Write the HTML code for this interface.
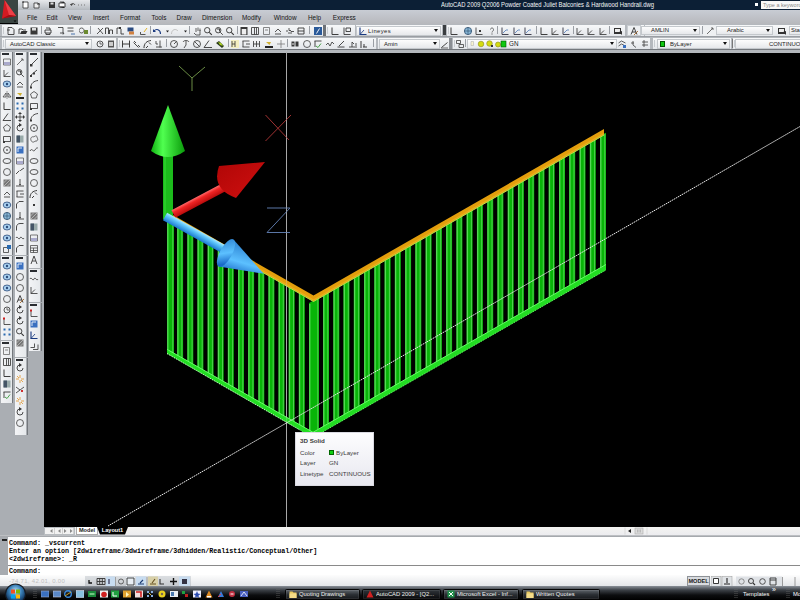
<!DOCTYPE html>
<html><head><meta charset="utf-8">
<style>
*{margin:0;padding:0;box-sizing:border-box}
html,body{width:800px;height:600px;overflow:hidden;background:#000;font-family:"Liberation Sans",sans-serif;position:relative}
.a{position:absolute}
</style></head><body>
<div class="a" style="left:0;top:0;width:18px;height:23px;background:#3a4542"></div>
<svg class="a" style="left:0;top:0" width="18" height="23"><path d="M4.5 0L16 16L2 18.5z" fill="#d41a22"/><path d="M4.5 0L16 16l-7-1z" fill="#ee4048"/><path d="M2 18.5l7-3.5 7 1z" fill="#a00c14"/><path d="M13.5 20.5h3l-1.5 1.5z" fill="#000"/></svg>
<div class="a" style="left:18px;top:0;width:72px;height:10px;background:linear-gradient(#e6e8eb,#b4b9bf)"></div>
<svg class="a" style="left:18px;top:0" width="72" height="10"><path d="M5 2h5v6H5z" fill="#fff" stroke="#333" stroke-width=".8"/><path d="M4 2h2" stroke="#333"/><path d="M16 3h4l1 1v4h-5z" fill="#eee" stroke="#333" stroke-width=".8"/><path d="M19 4h3" stroke="#333"/><path d="M31 2h6v6h-6z" fill="#333"/><path d="M32.5 2.5h3v2h-3z" fill="#ddd"/><path d="M41 3h6v4h-6z" fill="#fff" stroke="#333" stroke-width=".9"/><path d="M42 2h4v1M42 7h4v1" stroke="#333" stroke-width=".8"/><path d="M53 5c0-2 3-2 4 0" fill="none" stroke="#444" stroke-width="1"/><path d="M52 4l1.5 2 1.5-2z" fill="#444"/><path d="M60 5h1M63 5h1M66 5h1" stroke="#777"/></svg>
<div class="a" style="left:90px;top:0;width:710px;height:10px;background:#0c1f35"></div>
<div class="a" style="left:440.5px;top:0px;font-size:7.4px;line-height:10px;color:#f4f6f8;white-space:nowrap;transform-origin:0 0;transform:scaleX(0.795)">AutoCAD 2009 Q2006 Powder Coated Juliet Balconies &amp; Hardwood Handrail.dwg</div>
<div class="a" style="left:755px;top:3px;width:3px;height:3px;background:#fff"></div>
<div class="a" style="left:761px;top:1px;width:39px;height:8px;background:#f8f8f8;font-size:5.5px;line-height:8px;color:#888;padding-left:2px;white-space:nowrap;overflow:hidden">Type a keyword</div>
<div class="a" style="left:18px;top:10px;width:782px;height:14px;background:linear-gradient(#c8ccd4,#b7b8bc)"></div>
<div class="a" style="left:0;top:23.8px;width:800px;height:1px;background:#5e6266"></div>
<div class="a" style="left:27px;top:13px;font-size:6.4px;line-height:9px;color:#151515;white-space:nowrap">File</div>
<div class="a" style="left:46.5px;top:13px;font-size:6.4px;line-height:9px;color:#151515;white-space:nowrap">Edit</div>
<div class="a" style="left:68px;top:13px;font-size:6.4px;line-height:9px;color:#151515;white-space:nowrap">View</div>
<div class="a" style="left:93px;top:13px;font-size:6.4px;line-height:9px;color:#151515;white-space:nowrap">Insert</div>
<div class="a" style="left:120px;top:13px;font-size:6.4px;line-height:9px;color:#151515;white-space:nowrap">Format</div>
<div class="a" style="left:151.5px;top:13px;font-size:6.4px;line-height:9px;color:#151515;white-space:nowrap">Tools</div>
<div class="a" style="left:176.6px;top:13px;font-size:6.4px;line-height:9px;color:#151515;white-space:nowrap">Draw</div>
<div class="a" style="left:202px;top:13px;font-size:6.4px;line-height:9px;color:#151515;white-space:nowrap">Dimension</div>
<div class="a" style="left:242px;top:13px;font-size:6.4px;line-height:9px;color:#151515;white-space:nowrap">Modify</div>
<div class="a" style="left:273.8px;top:13px;font-size:6.4px;line-height:9px;color:#151515;white-space:nowrap">Window</div>
<div class="a" style="left:308px;top:13px;font-size:6.4px;line-height:9px;color:#151515;white-space:nowrap">Help</div>
<div class="a" style="left:332.7px;top:13px;font-size:6.4px;line-height:9px;color:#151515;white-space:nowrap">Express</div>
<div class="a" style="left:0;top:24px;width:800px;height:28.5px;background:#b4b8bd"></div>
<div class="a" style="left:0;top:49.3px;width:800px;height:1.2px;background:#74787d"></div>
<div class="a" style="left:0;top:36px;width:800px;height:1.2px;background:#9a9ea3"></div>
<div class="a" style="left:2px;top:24.5px;width:321px;height:11px;background:linear-gradient(#f7f8f9,#e3e6ea);"></div>
<div class="a" style="left:3px;top:26.5px;width:1px;height:7px;background:#c8ccd0"></div>
<div class="a" style="left:326px;top:24.5px;width:29px;height:11px;background:linear-gradient(#f7f8f9,#e3e6ea);"></div>
<div class="a" style="left:327px;top:26.5px;width:1px;height:7px;background:#c8ccd0"></div>
<div class="a" style="left:356px;top:24.5px;width:86px;height:11px;background:linear-gradient(#f7f8f9,#e3e6ea);"></div>
<div class="a" style="left:357px;top:26.5px;width:1px;height:7px;background:#c8ccd0"></div>
<div class="a" style="left:447px;top:24.5px;width:178px;height:11px;background:linear-gradient(#f7f8f9,#e3e6ea);"></div>
<div class="a" style="left:448px;top:26.5px;width:1px;height:7px;background:#c8ccd0"></div>
<div class="a" style="left:629px;top:24.5px;width:15px;height:11px;background:linear-gradient(#f7f8f9,#e3e6ea);"></div>
<div class="a" style="left:630px;top:26.5px;width:1px;height:7px;background:#c8ccd0"></div>
<div class="a" style="left:645px;top:24.5px;width:155px;height:11px;background:linear-gradient(#f7f8f9,#e3e6ea);"></div>
<div class="a" style="left:646px;top:26.5px;width:1px;height:7px;background:#c8ccd0"></div>
<div class="a" style="left:2px;top:37.5px;width:113.5px;height:11.5px;background:linear-gradient(#f7f8f9,#e3e6ea);"></div>
<div class="a" style="left:3px;top:39.5px;width:1px;height:7.5px;background:#c8ccd0"></div>
<div class="a" style="left:118px;top:37.5px;width:258px;height:11.5px;background:linear-gradient(#f7f8f9,#e3e6ea);"></div>
<div class="a" style="left:119px;top:39.5px;width:1px;height:7.5px;background:#c8ccd0"></div>
<div class="a" style="left:378px;top:37.5px;width:72px;height:11.5px;background:linear-gradient(#f7f8f9,#e3e6ea);"></div>
<div class="a" style="left:379px;top:39.5px;width:1px;height:7.5px;background:#c8ccd0"></div>
<div class="a" style="left:453px;top:37.5px;width:197px;height:11.5px;background:linear-gradient(#f7f8f9,#e3e6ea);"></div>
<div class="a" style="left:454px;top:39.5px;width:1px;height:7.5px;background:#c8ccd0"></div>
<div class="a" style="left:653px;top:37.5px;width:78px;height:11.5px;background:linear-gradient(#f7f8f9,#e3e6ea);"></div>
<div class="a" style="left:654px;top:39.5px;width:1px;height:7.5px;background:#c8ccd0"></div>
<div class="a" style="left:733px;top:37.5px;width:67px;height:11.5px;background:linear-gradient(#f7f8f9,#e3e6ea);"></div>
<div class="a" style="left:734px;top:39.5px;width:1px;height:7.5px;background:#c8ccd0"></div>
<div class="a" style="left:443px;top:25px;width:3px;height:10px;background:#3a3d40"></div>
<div class="a" style="left:323px;top:25px;width:2.5px;height:10.5px;background:#6e7277"></div>
<svg class="a" style="left:6px;top:25.5px" width="10" height="10" viewBox="0 0 10 10"><path d="M2 1.5h4l2 2v5h-6z" fill="none" stroke="#383838" stroke-width="0.91"/><path d="M1 4h3" fill="none" stroke="#383838" stroke-width="0.84"/></svg>
<svg class="a" style="left:18px;top:25.5px" width="10" height="10" viewBox="0 0 10 10"><path d="M1 8V3h3l1 1h3" fill="none" stroke="#383838" stroke-width="0.91"/><path d="M2 8l1.5-3H9.5L8 8z" fill="#333"/></svg>
<svg class="a" style="left:29px;top:25.5px" width="10" height="10" viewBox="0 0 10 10"><path d="M1.5 1.5h7v7h-7z" fill="#383838"/><path d="M3 2h4v2.5H3z" fill="#ddd"/></svg>
<svg class="a" style="left:43px;top:25.5px" width="10" height="10" viewBox="0 0 10 10"><path d="M2 4h6v3H2z M3 2h4v2 M3 7v1.5h4V7" fill="none" stroke="#383838" stroke-width="0.91"/></svg>
<svg class="a" style="left:56px;top:25.5px" width="10" height="10" viewBox="0 0 10 10"><path d="M2 1.5h5v6" fill="none" stroke="#383838" stroke-width="0.84"/><path d="M4 7h4l-1 1.5" fill="none" stroke="#383838" stroke-width="0.84"/></svg>
<svg class="a" style="left:66px;top:25.5px" width="10" height="10" viewBox="0 0 10 10"><path d="M1.5 2h6M1.5 5h6" fill="none" stroke="#383838" stroke-width="0.91"/><path d="M5 8h4" fill="none" stroke="#2a5aa0" stroke-width="0.84"/></svg>
<svg class="a" style="left:79px;top:25.5px" width="10" height="10" viewBox="0 0 10 10"><path d="M2.5 2a2.5 2.5 0 1 0 .1 0" fill="none" stroke="#383838" stroke-width="0.84"/><path d="M5 4h4v4H5z" fill="#6a8a30"/></svg>
<svg class="a" style="left:95px;top:25.5px" width="10" height="10" viewBox="0 0 10 10"><path d="M2 8L8 2M3 2l5 6" fill="none" stroke="#383838" stroke-width="0.84"/></svg>
<svg class="a" style="left:104px;top:25.5px" width="10" height="10" viewBox="0 0 10 10"><path d="M1.5 8V2h3v6 M5.5 8V4h3v4" fill="none" stroke="#383838" stroke-width="0.91"/></svg>
<svg class="a" style="left:115px;top:25.5px" width="10" height="10" viewBox="0 0 10 10"><path d="M2 8V2h3M6 3v5h3" fill="none" stroke="#383838" stroke-width="0.91"/><path d="M4 1h2v2H4z" fill="#383838"/></svg>
<svg class="a" style="left:126px;top:25.5px" width="10" height="10" viewBox="0 0 10 10"><path d="M1.5 1.5h6v4h-6z" fill="#2a4a80"/><path d="M3 5.5h5v3H3z" fill="#d08040"/></svg>
<svg class="a" style="left:139px;top:25.5px" width="10" height="10" viewBox="0 0 10 10"><path d="M1.5 6v2.5h5" fill="none" stroke="#383838" stroke-width="0.84"/><path d="M5 6l3-4" fill="none" stroke="#e0b020" stroke-width="0.98"/></svg>
<svg class="a" style="left:152px;top:25.5px" width="10" height="10" viewBox="0 0 10 10"><path d="M8.5 8C8.5 3 4 2.5 2 5" fill="none" stroke="#1a3a80" stroke-width="1.12"/><path d="M1 3l3 3H1z" fill="#1a3a80"/></svg>
<svg class="a" style="left:162px;top:25.5px" width="10" height="10" viewBox="0 0 10 10"><path d="M4 4.5h3L5.5 6.5z" fill="#222"/></svg>
<svg class="a" style="left:170px;top:25.5px" width="10" height="10" viewBox="0 0 10 10"><path d="M1.5 8C1.5 3 6 2.5 8 5" fill="none" stroke="#bbb" stroke-width="0.84"/></svg>
<svg class="a" style="left:180px;top:25.5px" width="10" height="10" viewBox="0 0 10 10"><path d="M4 4.5h3L5.5 6.5z" fill="#222"/></svg>
<svg class="a" style="left:192px;top:25.5px" width="10" height="10" viewBox="0 0 10 10"><path d="M2 7l2 2h4V4M4 6V2M6 5V1.5M8 5V2.5" fill="none" stroke="#383838" stroke-width="0.77"/></svg>
<svg class="a" style="left:203px;top:25.5px" width="10" height="10" viewBox="0 0 10 10"><path d="M4.2 4.2m-2.7 0a2.7 2.7 0 1 0 5.4 0a2.7 2.7 0 1 0-5.4 0" fill="none" stroke="#383838" stroke-width="0.91"/><path d="M6.3 6.3l2.5 2.5" fill="none" stroke="#383838" stroke-width="1.12"/></svg>
<svg class="a" style="left:214px;top:25.5px" width="10" height="10" viewBox="0 0 10 10"><path d="M4.2 4.2m-2.7 0a2.7 2.7 0 1 0 5.4 0a2.7 2.7 0 1 0-5.4 0" fill="none" stroke="#383838" stroke-width="0.91"/><path d="M6.3 6.3l2.5 2.5M3 3h2.5v2.5" fill="none" stroke="#383838" stroke-width="0.91"/></svg>
<svg class="a" style="left:225px;top:25.5px" width="10" height="10" viewBox="0 0 10 10"><path d="M4.2 4.2m-2.7 0a2.7 2.7 0 1 0 5.4 0a2.7 2.7 0 1 0-5.4 0" fill="none" stroke="#383838" stroke-width="0.91"/><path d="M6.3 6.3l2.5 2.5" fill="none" stroke="#383838" stroke-width="1.12"/></svg>
<svg class="a" style="left:239px;top:25.5px" width="10" height="10" viewBox="0 0 10 10"><path d="M1.5 1h7v8h-7z" fill="#383838"/><path d="M2.7 3h4.6v5.5H2.7z" fill="#eee"/></svg>
<svg class="a" style="left:250px;top:25.5px" width="10" height="10" viewBox="0 0 10 10"><path d="M1.5 1.5v7h7v-7z M4.5 1.5v7 M6.5 1.5v7" fill="none" stroke="#383838" stroke-width="0.84"/></svg>
<svg class="a" style="left:262px;top:25.5px" width="10" height="10" viewBox="0 0 10 10"><path d="M1.5 1.5h6v7h-6z M3 4h3" fill="none" stroke="#666" stroke-width="0.77"/></svg>
<svg class="a" style="left:273px;top:25.5px" width="10" height="10" viewBox="0 0 10 10"><path d="M2 6l3-3 3 3M2 8h6" fill="none" stroke="#383838" stroke-width="0.84"/></svg>
<svg class="a" style="left:285px;top:25.5px" width="10" height="10" viewBox="0 0 10 10"><path d="M1 5h2M4 2v2.5h2M6 8V5.5h3M3 7h2" fill="none" stroke="#383838" stroke-width="0.84"/></svg>
<svg class="a" style="left:296px;top:25.5px" width="10" height="10" viewBox="0 0 10 10"><path d="M2 2h6v6H2z M2 5h6" fill="none" stroke="#383838" stroke-width="0.91"/></svg>
<svg class="a" style="left:313px;top:25.5px" width="10" height="10" viewBox="0 0 10 10"><path d="M1 1h8v8H1z" fill="#2a5a9a"/><path d="M6.5 2.5l-3 5" fill="none" stroke="#fff" stroke-width="0.91"/></svg>
<svg class="a" style="left:330px;top:25.5px" width="10" height="10" viewBox="0 0 10 10"><path d="M2 1.5v7h6.5" fill="none" stroke="#383838" stroke-width="0.98"/></svg>
<svg class="a" style="left:342px;top:25.5px" width="10" height="10" viewBox="0 0 10 10"><path d="M2 1.5v7h6.5M4 2h4.5v3.5H4z" fill="none" stroke="#383838" stroke-width="0.91"/></svg>
<div class="a" style="left:41px;top:26px;width:1px;height:8px;background:#9a9ea4"></div>
<div class="a" style="left:90px;top:26px;width:1px;height:8px;background:#9a9ea4"></div>
<div class="a" style="left:150px;top:26px;width:1px;height:8px;background:#9a9ea4"></div>
<div class="a" style="left:189px;top:26px;width:1px;height:8px;background:#9a9ea4"></div>
<div class="a" style="left:237px;top:26px;width:1px;height:8px;background:#9a9ea4"></div>
<div class="a" style="left:309px;top:26px;width:1px;height:8px;background:#9a9ea4"></div>
<div class="a" style="left:356px;top:25.5px;width:85px;height:10px;background:linear-gradient(#fdfdfd,#e6e8eb);border:1px solid #c4c8cc;font-size:5.9px;line-height:8px;padding-left:2px;color:#1a1a1a;white-space:nowrap;overflow:hidden;"></div>
<div class="a" style="left:434px;top:29.0px;width:0;height:0;border-left:2.5px solid transparent;border-right:2.5px solid transparent;border-top:3px solid #111"></div>
<svg class="a" style="left:358px;top:25.5px" width="10" height="10" viewBox="0 0 10 10"><path d="M2 1.5v7h6.5" fill="none" stroke="#1a3a80" stroke-width="1.12"/><path d="M2 8.5L6 4" fill="none" stroke="#1a3a80" stroke-width="0.84"/></svg>
<div class="a" style="left:368px;top:25.5px;font-size:5.9px;line-height:10px;color:#1a1a1a;letter-spacing:.4px">Lineyes</div>
<svg class="a" style="left:449px;top:25.5px" width="10" height="10" viewBox="0 0 10 10"><path d="M2 1.5v7h6.5" fill="none" stroke="#383838" stroke-width="0.98"/></svg>
<svg class="a" style="left:463px;top:25.5px" width="10" height="10" viewBox="0 0 10 10"><circle cx="5" cy="5" r="3.6" fill="#8ab8d8" stroke="#2a4a6a" stroke-width=".8"/><path d="M1.5 5h7M5 1.5v7" stroke="#2a4a6a" stroke-width=".6"/></svg>
<svg class="a" style="left:474px;top:25.5px" width="10" height="10" viewBox="0 0 10 10"><path d="M2 1.5v7h6.5" fill="none" stroke="#383838" stroke-width="0.84"/><path d="M5 4h2v2H5z" fill="#383838"/></svg>
<svg class="a" style="left:487px;top:25.5px" width="10" height="10" viewBox="0 0 10 10"><path d="M3.5 3.5c0-2 3-2 3 0s-1.5 1.5-1.5 3" fill="none" stroke="#444" stroke-width="0.77"/><path d="M4.5 7.5h1v1h-1z" fill="#444"/></svg>
<svg class="a" style="left:500px;top:25.5px" width="10" height="10" viewBox="0 0 10 10"><path d="M2 1.5v7h6.5" fill="none" stroke="#223" stroke-width="0.84"/><path d="M3 7l3-3h2" fill="none" stroke="#3a6ab0" stroke-width="0.7"/></svg>
<svg class="a" style="left:512px;top:25.5px" width="10" height="10" viewBox="0 0 10 10"><path d="M2 1.5v7h6.5" fill="none" stroke="#223" stroke-width="0.84"/><path d="M3 7l3-3h2" fill="none" stroke="#3a6ab0" stroke-width="0.7"/></svg>
<svg class="a" style="left:523px;top:25.5px" width="10" height="10" viewBox="0 0 10 10"><path d="M2 1.5v7h6.5" fill="none" stroke="#223" stroke-width="0.84"/><path d="M3 7l3-3h2" fill="none" stroke="#3a6ab0" stroke-width="0.7"/></svg>
<svg class="a" style="left:539px;top:25.5px" width="10" height="10" viewBox="0 0 10 10"><path d="M2 1.5v7h6.5" fill="none" stroke="#383838" stroke-width="0.98"/></svg>
<svg class="a" style="left:550px;top:25.5px" width="10" height="10" viewBox="0 0 10 10"><path d="M2 8.5V2M2 8.5h6.5M2 8.5l4-4" fill="none" stroke="#383838" stroke-width="0.84"/></svg>
<svg class="a" style="left:561px;top:25.5px" width="10" height="10" viewBox="0 0 10 10"><path d="M2 1.5v7h6.5" fill="none" stroke="#223" stroke-width="0.84"/><path d="M3 7l3-3h2" fill="none" stroke="#3a6ab0" stroke-width="0.7"/></svg>
<svg class="a" style="left:575px;top:25.5px" width="10" height="10" viewBox="0 0 10 10"><path d="M2 8.5V2M2 8.5h6.5M2 8.5l4-4" fill="none" stroke="#383838" stroke-width="0.84"/></svg>
<svg class="a" style="left:586px;top:25.5px" width="10" height="10" viewBox="0 0 10 10"><path d="M2 8.5V2M2 8.5h6.5M2 8.5l4-4" fill="none" stroke="#383838" stroke-width="0.84"/></svg>
<svg class="a" style="left:598px;top:25.5px" width="10" height="10" viewBox="0 0 10 10"><path d="M2 8.5V2M2 8.5h6.5M2 8.5l4-4" fill="none" stroke="#383838" stroke-width="0.84"/></svg>
<svg class="a" style="left:613px;top:25.5px" width="10" height="10" viewBox="0 0 10 10"><path d="M1 2h7v6H1z" fill="#333"/><path d="M2 3h5v3H2z" fill="#eee"/><path d="M6 6l3 3V5z" fill="#333"/></svg>
<div class="a" style="left:497px;top:26px;width:1px;height:8px;background:#9a9ea4"></div>
<div class="a" style="left:536px;top:26px;width:1px;height:8px;background:#9a9ea4"></div>
<div class="a" style="left:573px;top:26px;width:1px;height:8px;background:#9a9ea4"></div>
<div class="a" style="left:609px;top:26px;width:1px;height:8px;background:#9a9ea4"></div>
<div class="a" style="left:627px;top:25px;width:14px;height:10.5px;background:#eef0f2;border:1px solid #c8ccd0"></div>
<svg class="a" style="left:629px;top:25.5px" width="10" height="10" viewBox="0 0 10 10"><path d="M2 8.5l3-7 3 7M3 6h4" fill="none" stroke="#333" stroke-width="0.91"/><path d="M5 9l4-4" fill="none" stroke="#a06020" stroke-width="0.84"/></svg>
<div class="a" style="left:641px;top:26px;width:59px;height:9px;background:linear-gradient(#fdfdfd,#e6e8eb);border:1px solid #c4c8cc;font-size:5.9px;line-height:7px;padding-left:9px;color:#1a1a1a;white-space:nowrap;overflow:hidden;">AMLIN</div>
<div class="a" style="left:693px;top:29.0px;width:0;height:0;border-left:2.5px solid transparent;border-right:2.5px solid transparent;border-top:3px solid #111"></div>
<div class="a" style="left:702px;top:26px;width:1px;height:8px;background:#9a9ea4"></div>
<div class="a" style="left:703px;top:25px;width:13px;height:10.5px;background:#eef0f2"></div>
<svg class="a" style="left:705px;top:25.5px" width="10" height="10" viewBox="0 0 10 10"><path d="M2 8l6-6M6 2h2v2" fill="none" stroke="#555" stroke-width="0.84"/></svg>
<div class="a" style="left:716px;top:26px;width:57px;height:9px;background:linear-gradient(#fdfdfd,#e6e8eb);border:1px solid #c4c8cc;font-size:5.9px;line-height:7px;padding-left:10px;color:#1a1a1a;white-space:nowrap;overflow:hidden;">Arabic</div>
<div class="a" style="left:766px;top:29.0px;width:0;height:0;border-left:2.5px solid transparent;border-right:2.5px solid transparent;border-top:3px solid #111"></div>
<svg class="a" style="left:777px;top:25.5px" width="10" height="10" viewBox="0 0 10 10"><path d="M1 2h7v6H1z" fill="#333"/><path d="M2 3h5v3H2z" fill="#eee"/><path d="M6 6l3 3V5z" fill="#333"/></svg>
<div class="a" style="left:789px;top:26px;width:12px;height:9px;background:linear-gradient(#fdfdfd,#e6e8eb);border:1px solid #c4c8cc;font-size:5.9px;line-height:7px;padding-left:1px;color:#1a1a1a;white-space:nowrap;overflow:hidden;">Sta</div>
<div class="a" style="left:5px;top:38.5px;width:87px;height:10px;background:linear-gradient(#fdfdfd,#e6e8eb);border:1px solid #c4c8cc;font-size:5.9px;line-height:8px;padding-left:4px;color:#1a1a1a;white-space:nowrap;overflow:hidden;">AutoCAD Classic</div>
<div class="a" style="left:85px;top:42.0px;width:0;height:0;border-left:2.5px solid transparent;border-right:2.5px solid transparent;border-top:3px solid #111"></div>
<svg class="a" style="left:95px;top:38.5px" width="10" height="10" viewBox="0 0 10 10"><path d="M5 5m-3 0a3 3 0 1 0 6 0a3 3 0 1 0-6 0" fill="none" stroke="#383838" stroke-width="0.84"/><path d="M5 3v2h2" fill="none" stroke="#383838" stroke-width="0.7"/></svg>
<svg class="a" style="left:106px;top:38.5px" width="10" height="10" viewBox="0 0 10 10"><path d="M2 1.5h6v7H2z" fill="#555"/><path d="M3 3h4v4H3z" fill="#ccc"/></svg>
<svg class="a" style="left:121px;top:38.5px" width="10" height="10" viewBox="0 0 10 10"><path d="M1.5 1.5v7M8.5 1.5v7M1.5 5h7" fill="none" stroke="#383838" stroke-width="0.98"/></svg>
<svg class="a" style="left:132px;top:38.5px" width="10" height="10" viewBox="0 0 10 10"><path d="M2 2l2 2M8 8l-2-2M1.5 3.5l5 5" fill="none" stroke="#383838" stroke-width="0.91"/></svg>
<svg class="a" style="left:143px;top:38.5px" width="10" height="10" viewBox="0 0 10 10"><path d="M1 9C1 4 4 2 8 1.5M3 9l2-2M6 3.5l2 2" fill="none" stroke="#383838" stroke-width="0.98"/></svg>
<svg class="a" style="left:154px;top:38.5px" width="10" height="10" viewBox="0 0 10 10"><path d="M2 2v3h2M6 1.5v7M2 8h6" fill="none" stroke="#383838" stroke-width="0.84"/></svg>
<svg class="a" style="left:169px;top:38.5px" width="10" height="10" viewBox="0 0 10 10"><path d="M5 5m-3.5 0a3.5 3.5 0 1 0 7 0a3.5 3.5 0 1 0-7 0 M5 5l2.5-2.5" fill="none" stroke="#383838" stroke-width="0.84"/></svg>
<svg class="a" style="left:181px;top:38.5px" width="10" height="10" viewBox="0 0 10 10"><path d="M2 3c1-2 5-2 6 0M5 2v4l-2 3" fill="none" stroke="#383838" stroke-width="0.84"/></svg>
<svg class="a" style="left:192px;top:38.5px" width="10" height="10" viewBox="0 0 10 10"><path d="M5 5m-3.5 0a3.5 3.5 0 1 0 7 0a3.5 3.5 0 1 0-7 0 M2.5 2.5l5 5" fill="none" stroke="#383838" stroke-width="0.84"/></svg>
<svg class="a" style="left:203px;top:38.5px" width="10" height="10" viewBox="0 0 10 10"><path d="M1 8.5h8M1 8.5l5-7" fill="none" stroke="#383838" stroke-width="0.91"/></svg>
<svg class="a" style="left:215px;top:38.5px" width="10" height="10" viewBox="0 0 10 10"><path d="M1 4l3-2 5 5-2 2z" fill="#2a3a1a"/><path d="M3 3l3 1 2 3-3-1z" fill="#a8d020"/></svg>
<svg class="a" style="left:230px;top:38.5px" width="10" height="10" viewBox="0 0 10 10"><path d="M1 1h8v8H1z" fill="#f4eec0"/><path d="M2 2v6M2 5h3M5 2v6" fill="none" stroke="#383838" stroke-width="0.84"/></svg>
<svg class="a" style="left:241px;top:38.5px" width="10" height="10" viewBox="0 0 10 10"><path d="M1.5 2h7M1.5 8h7M2 2v6M5 5h4" fill="none" stroke="#383838" stroke-width="0.84"/></svg>
<svg class="a" style="left:252px;top:38.5px" width="10" height="10" viewBox="0 0 10 10"><path d="M1.5 2v6M4.5 2v6M7.5 2v6M1.5 5h6" fill="none" stroke="#383838" stroke-width="0.84"/></svg>
<svg class="a" style="left:264px;top:38.5px" width="10" height="10" viewBox="0 0 10 10"><path d="M1 7h8v2H1z" fill="#222"/><path d="M2 3h5l-1.5 3z" fill="#d0b030"/></svg>
<svg class="a" style="left:276px;top:38.5px" width="10" height="10" viewBox="0 0 10 10"><path d="M5 1v8M1 5h8" fill="none" stroke="#777" stroke-width="0.77"/></svg>
<svg class="a" style="left:290px;top:38.5px" width="10" height="10" viewBox="0 0 10 10"><path d="M1.5 2.5h3v5h-3z M5.5 2.5h3v5h-3z" fill="#383838"/><path d="M2.5 4h1v2h-1z" fill="#eee"/></svg>
<svg class="a" style="left:302px;top:38.5px" width="10" height="10" viewBox="0 0 10 10"><path d="M5 5m-3.5 0a3.5 3.5 0 1 0 7 0a3.5 3.5 0 1 0-7 0" fill="none" stroke="#383838" stroke-width="0.77"/></svg>
<svg class="a" style="left:313px;top:38.5px" width="10" height="10" viewBox="0 0 10 10"><path d="M1.5 2h7M2 2v6" fill="none" stroke="#383838" stroke-width="0.91"/><path d="M3 7l2 1.5 3-4" fill="none" stroke="#3a9a3a" stroke-width="0.91"/></svg>
<svg class="a" style="left:325px;top:38.5px" width="10" height="10" viewBox="0 0 10 10"><path d="M1 6l2-2 2 3 2-4 2 2" fill="none" stroke="#383838" stroke-width="0.84"/></svg>
<svg class="a" style="left:336px;top:38.5px" width="10" height="10" viewBox="0 0 10 10"><path d="M1.5 8h7M3 7l5-5" fill="none" stroke="#383838" stroke-width="0.91"/></svg>
<svg class="a" style="left:348px;top:38.5px" width="10" height="10" viewBox="0 0 10 10"><path d="M1 8h6M4 8V3l2 2M8 4v5" fill="none" stroke="#383838" stroke-width="0.84"/></svg>
<svg class="a" style="left:359px;top:38.5px" width="10" height="10" viewBox="0 0 10 10"><path d="M2 2v7M4 8h4M5 5v3" fill="none" stroke="#383838" stroke-width="0.98"/></svg>
<div class="a" style="left:166px;top:39px;width:1px;height:8px;background:#9a9ea4"></div>
<div class="a" style="left:228px;top:39px;width:1px;height:8px;background:#9a9ea4"></div>
<div class="a" style="left:287px;top:39px;width:1px;height:8px;background:#9a9ea4"></div>
<div class="a" style="left:373px;top:39px;width:1px;height:8px;background:#9a9ea4"></div>
<div class="a" style="left:379px;top:38.5px;width:61px;height:10px;background:linear-gradient(#fdfdfd,#e6e8eb);border:1px solid #c4c8cc;font-size:5.9px;line-height:8px;padding-left:4px;color:#1a1a1a;white-space:nowrap;overflow:hidden;">Amin</div>
<div class="a" style="left:433px;top:42.0px;width:0;height:0;border-left:2.5px solid transparent;border-right:2.5px solid transparent;border-top:3px solid #111"></div>
<svg class="a" style="left:440px;top:38.5px" width="10" height="10" viewBox="0 0 10 10"><path d="M1.5 8.5l6-5" fill="none" stroke="#333" stroke-width="0.91"/><path d="M1 9h7" fill="none" stroke="#333" stroke-width="0.7"/></svg>
<div class="a" style="left:449px;top:38px;width:3px;height:10.5px;background:#8a8e93"></div>
<svg class="a" style="left:455px;top:38.5px" width="10" height="10" viewBox="0 0 10 10"><path d="M1.5 1.5h4v3h-4zM4 5.5h4.5v3H4z" fill="none" stroke="#383838" stroke-width="0.77"/></svg>
<div class="a" style="left:465px;top:39px;width:1px;height:8px;background:#9a9ea4"></div>
<div class="a" style="left:467px;top:38.5px;width:150px;height:10px;background:linear-gradient(#fdfdfd,#e6e8eb);border:1px solid #c4c8cc;font-size:5.9px;line-height:8px;padding-left:4px;color:#1a1a1a;white-space:nowrap;overflow:hidden;"></div>
<div class="a" style="left:610px;top:42.0px;width:0;height:0;border-left:2.5px solid transparent;border-right:2.5px solid transparent;border-top:3px solid #111"></div>
<svg class="a" style="left:467px;top:38.5px" width="60" height="10"><path d="M4 2.5h2.5v4H4z" fill="#f8f4d0" stroke="#aaa" stroke-width=".5"/><circle cx="14" cy="5" r="2.8" fill="#d4dc10" stroke="#8a8a20" stroke-width=".6"/><circle cx="22.5" cy="4.5" r="2.8" fill="#d4dc10" stroke="#8a8a20" stroke-width=".6"/><path d="M24 6h2v2h-2z" fill="#333"/><circle cx="31" cy="5.5" r="2.5" fill="#d4dc10" stroke="#8a8a20" stroke-width=".6"/><rect x="34" y="2" width="5" height="6" fill="#10c810" stroke="#050" stroke-width=".6"/></svg>
<div class="a" style="left:509px;top:38.5px;font-size:6.3px;line-height:10px;color:#222">GN</div>
<svg class="a" style="left:617px;top:38.5px" width="10" height="10" viewBox="0 0 10 10"><path d="M1.5 7l3-2 4 2M1.5 4l3-2 4 2" fill="none" stroke="#333" stroke-width="0.77"/><path d="M6 6h3v3H6z" fill="#3a70c0"/></svg>
<svg class="a" style="left:629px;top:38.5px" width="10" height="10" viewBox="0 0 10 10"><path d="M2 4h3M4 2v4l3 2.5" fill="none" stroke="#383838" stroke-width="0.77"/></svg>
<svg class="a" style="left:640px;top:38.5px" width="10" height="10" viewBox="0 0 10 10"><path d="M2 3h6M2 6h6M4 1v7" fill="none" stroke="#383838" stroke-width="0.77"/></svg>
<div class="a" style="left:657px;top:38.5px;width:73px;height:10px;background:linear-gradient(#fdfdfd,#e6e8eb);border:1px solid #c4c8cc;font-size:5.9px;line-height:8px;padding-left:12px;color:#1a1a1a;white-space:nowrap;overflow:hidden;">ByLayer</div>
<div class="a" style="left:723px;top:42.0px;width:0;height:0;border-left:2.5px solid transparent;border-right:2.5px solid transparent;border-top:3px solid #111"></div>
<div class="a" style="left:660px;top:40.5px;width:5px;height:6px;background:#10c810;border:1px solid #050"></div>
<div class="a" style="left:732px;top:39px;width:1px;height:9px;background:#777"></div>
<div class="a" style="left:735px;top:38.5px;width:66px;height:10px;background:linear-gradient(#fdfdfd,#e6e8eb);border:1px solid #c4c8cc;font-size:5.9px;line-height:8px;padding-left:33px;color:#1a1a1a;white-space:nowrap;overflow:hidden;">CONTINUOUS</div>
<div class="a" style="left:0;top:52px;width:44px;height:485px;background:#aaaeb3"></div>
<div class="a" style="left:1px;top:52.3px;width:10.7px;height:202.7px;background:linear-gradient(90deg,#f3f4f6,#e6e9ec)"></div>
<div class="a" style="left:12.299999999999999px;top:52.3px;width:1.2px;height:202.7px;background:#74787d"></div>
<div class="a" style="left:2.2px;top:53.099999999999994px;width:7px;height:2px;background:#2a2d31"></div>
<svg class="a" style="left:1.5px;top:57.3px" width="10" height="10" viewBox="0 0 10 10"><path d="M1.5 2h7v6h-7z" fill="none" stroke="#555" stroke-width="0.77"/><path d="M2 5h6v3H2z" fill="#aac"/></svg>
<svg class="a" style="left:1.5px;top:68.3px" width="10" height="10" viewBox="0 0 10 10"><path d="M2 8.5V2M2 8.5h6.5M2 8.5l4-4" fill="none" stroke="#383838" stroke-width="0.84"/></svg>
<svg class="a" style="left:1.5px;top:79.3px" width="10" height="10" viewBox="0 0 10 10"><ellipse cx="5" cy="5" rx="3.8" ry="3" fill="#a8d0f0" stroke="#2a4a7a" stroke-width=".8"/><circle cx="5" cy="5" r="1.2" fill="#2a4a7a"/></svg>
<svg class="a" style="left:1.5px;top:90.3px" width="10" height="10" viewBox="0 0 10 10"><path d="M5 1v8" fill="none" stroke="#777" stroke-width="0.7"/><path d="M1 7l3-4v4zM9 7L6 3v4z" fill="none" stroke="#383838" stroke-width="0.7"/></svg>
<svg class="a" style="left:1.5px;top:101.3px" width="10" height="10" viewBox="0 0 10 10"><path d="M2 1.5v7h6.5" fill="none" stroke="#383838" stroke-width="0.98"/></svg>
<svg class="a" style="left:1.5px;top:112.3px" width="10" height="10" viewBox="0 0 10 10"><path d="M1 8.5h8M1 8.5l5-7" fill="none" stroke="#383838" stroke-width="0.91"/></svg>
<svg class="a" style="left:1.5px;top:123.3px" width="10" height="10" viewBox="0 0 10 10"><path d="M5 1.5l3.5 2.5-1.3 4H2.8L1.5 4z" fill="none" stroke="#383838" stroke-width="0.77"/></svg>
<svg class="a" style="left:1.5px;top:134.3px" width="10" height="10" viewBox="0 0 10 10"><path d="M1.5 2.5h7v5h-7z" fill="none" stroke="#383838" stroke-width="0.84"/><path d="M1 7h2v2H1z" fill="#383838"/></svg>
<svg class="a" style="left:1.5px;top:145.3px" width="10" height="10" viewBox="0 0 10 10"><path d="M5 5m-3.5 0a3.5 3.5 0 1 0 7 0a3.5 3.5 0 1 0-7 0" fill="none" stroke="#383838" stroke-width="0.84"/><path d="M4.3 4.3h1.4v1.4H4.3z" fill="#383838"/></svg>
<svg class="a" style="left:1.5px;top:156.3px" width="10" height="10" viewBox="0 0 10 10"><path d="M5 5m-4 0a4 2.5 0 1 0 8 0a4 2.5 0 1 0-8 0" fill="none" stroke="#383838" stroke-width="0.84"/></svg>
<svg class="a" style="left:1.5px;top:167.3px" width="10" height="10" viewBox="0 0 10 10"><path d="M5 5m-3.5 0a3.5 3.5 0 1 0 7 0a3.5 3.5 0 1 0-7 0" fill="none" stroke="#383838" stroke-width="0.77"/></svg>
<svg class="a" style="left:1.5px;top:178.3px" width="10" height="10" viewBox="0 0 10 10"><path d="M1.5 1.5h7v7h-7z" fill="#777"/><path d="M1.5 5l3.5-3.5M1.5 8.5l7-7M5 8.5l3.5-3.5" fill="none" stroke="#ccc" stroke-width="0.7"/></svg>
<svg class="a" style="left:1.5px;top:189.3px" width="10" height="10" viewBox="0 0 10 10"><path d="M2 6l3-3 3 3M2 8h6" fill="none" stroke="#383838" stroke-width="0.84"/></svg>
<svg class="a" style="left:1.5px;top:200.3px" width="10" height="10" viewBox="0 0 10 10"><ellipse cx="5" cy="5" rx="3.8" ry="3" fill="#a8d0f0" stroke="#2a4a7a" stroke-width=".8"/><circle cx="5" cy="5" r="1.2" fill="#2a4a7a"/></svg>
<svg class="a" style="left:1.5px;top:211.3px" width="10" height="10" viewBox="0 0 10 10"><circle cx="5" cy="5" r="3.6" fill="#8ab8d8" stroke="#2a4a6a" stroke-width=".8"/><path d="M1.5 5h7M5 1.5v7" stroke="#2a4a6a" stroke-width=".6"/></svg>
<svg class="a" style="left:1.5px;top:222.3px" width="10" height="10" viewBox="0 0 10 10"><ellipse cx="5" cy="5" rx="3.8" ry="3" fill="#a8d0f0" stroke="#2a4a7a" stroke-width=".8"/><circle cx="5" cy="5" r="1.2" fill="#2a4a7a"/></svg>
<svg class="a" style="left:1.5px;top:233.3px" width="10" height="10" viewBox="0 0 10 10"><ellipse cx="5" cy="5" rx="3.8" ry="3" fill="#a8d0f0" stroke="#2a4a7a" stroke-width=".8"/><circle cx="5" cy="5" r="1.2" fill="#2a4a7a"/></svg>
<svg class="a" style="left:1.5px;top:244.3px" width="10" height="10" viewBox="0 0 10 10"><path d="M1.5 3.5h5v5h-5z" fill="none" stroke="#383838" stroke-width="0.77"/><path d="M5 1h4v4H5z" fill="#2a6ab0"/></svg>
<div class="a" style="left:1px;top:256px;width:10.7px;height:84px;background:linear-gradient(90deg,#f3f4f6,#e6e9ec)"></div>
<div class="a" style="left:12.299999999999999px;top:256px;width:1.2px;height:84px;background:#74787d"></div>
<div class="a" style="left:2.2px;top:256.8px;width:7px;height:2px;background:#2a2d31"></div>
<svg class="a" style="left:1.5px;top:261px" width="10" height="10" viewBox="0 0 10 10"><ellipse cx="5" cy="5" rx="3.8" ry="3" fill="#a8d0f0" stroke="#2a4a7a" stroke-width=".8"/><circle cx="5" cy="5" r="1.2" fill="#2a4a7a"/></svg>
<svg class="a" style="left:1.5px;top:272px" width="10" height="10" viewBox="0 0 10 10"><ellipse cx="5" cy="5" rx="3.8" ry="3" fill="#a8d0f0" stroke="#2a4a7a" stroke-width=".8"/><circle cx="5" cy="5" r="1.2" fill="#2a4a7a"/></svg>
<svg class="a" style="left:1.5px;top:283px" width="10" height="10" viewBox="0 0 10 10"><ellipse cx="5" cy="5" rx="3.8" ry="3" fill="#a8d0f0" stroke="#2a4a7a" stroke-width=".8"/><circle cx="5" cy="5" r="1.2" fill="#2a4a7a"/></svg>
<svg class="a" style="left:1.5px;top:294px" width="10" height="10" viewBox="0 0 10 10"><path d="M5 5m-3.5 0a3.5 3.5 0 1 0 7 0a3.5 3.5 0 1 0-7 0" fill="none" stroke="#383838" stroke-width="0.77"/></svg>
<svg class="a" style="left:1.5px;top:305px" width="10" height="10" viewBox="0 0 10 10"><path d="M5 5m-3 0a3 3 0 1 0 6 0a3 3 0 1 0-6 0" fill="none" stroke="#383838" stroke-width="0.84"/><path d="M5 3v2h2" fill="none" stroke="#383838" stroke-width="0.7"/></svg>
<svg class="a" style="left:1.5px;top:316px" width="10" height="10" viewBox="0 0 10 10"><path d="M2 8.5V2M2 8.5h6.5" fill="none" stroke="#383838" stroke-width="0.84"/><path d="M1 1.5h2v2H1z" fill="#d02020"/></svg>
<svg class="a" style="left:1.5px;top:327px" width="10" height="10" viewBox="0 0 10 10"><path d="M1.5 1.5h2v2h-2zM6.5 1.5h2v2h-2zM1.5 6.5h2v2h-2zM6.5 6.5h2v2h-2z" fill="#2a6ab0"/></svg>
<div class="a" style="left:1px;top:341px;width:10.7px;height:62px;background:linear-gradient(90deg,#f3f4f6,#e6e9ec)"></div>
<div class="a" style="left:12.299999999999999px;top:341px;width:1.2px;height:62px;background:#74787d"></div>
<div class="a" style="left:2.2px;top:341.8px;width:7px;height:2px;background:#2a2d31"></div>
<svg class="a" style="left:1.5px;top:346px" width="10" height="10" viewBox="0 0 10 10"><path d="M1.5 1.5h6v7h-6z M3 4h3" fill="none" stroke="#666" stroke-width="0.77"/></svg>
<svg class="a" style="left:1.5px;top:357px" width="10" height="10" viewBox="0 0 10 10"><path d="M1.5 1.5v7h7v-7z M4.5 1.5v7 M6.5 1.5v7" fill="none" stroke="#383838" stroke-width="0.84"/></svg>
<svg class="a" style="left:1.5px;top:368px" width="10" height="10" viewBox="0 0 10 10"><path d="M2 1.5v7h6.5" fill="none" stroke="#383838" stroke-width="0.98"/></svg>
<svg class="a" style="left:1.5px;top:379px" width="10" height="10" viewBox="0 0 10 10"><path d="M1.5 1.5h7v7h-7z" fill="#9aa"/><path d="M1.5 1.5h3.5v7H1.5z" fill="#456"/></svg>
<svg class="a" style="left:1.5px;top:390px" width="10" height="10" viewBox="0 0 10 10"><path d="M1.5 2h7M2 2v6" fill="none" stroke="#383838" stroke-width="0.91"/><path d="M3 7l2 1.5 3-4" fill="none" stroke="#3a9a3a" stroke-width="0.91"/></svg>
<div class="a" style="left:14.7px;top:52.3px;width:11.4px;height:202.7px;background:linear-gradient(90deg,#f3f4f6,#e6e9ec)"></div>
<div class="a" style="left:26.700000000000003px;top:52.3px;width:1.2px;height:202.7px;background:#74787d"></div>
<div class="a" style="left:15.899999999999999px;top:53.099999999999994px;width:7px;height:2px;background:#2a2d31"></div>
<svg class="a" style="left:15.2px;top:57.3px" width="10" height="10" viewBox="0 0 10 10"><path d="M2 8l6-6M6 2h2v2" fill="none" stroke="#555" stroke-width="0.84"/></svg>
<svg class="a" style="left:15.2px;top:68.3px" width="10" height="10" viewBox="0 0 10 10"><path d="M4.2 4.2m-2.7 0a2.7 2.7 0 1 0 5.4 0a2.7 2.7 0 1 0-5.4 0" fill="none" stroke="#383838" stroke-width="0.91"/><path d="M6.3 6.3l2.5 2.5M3 3h2.5v2.5" fill="none" stroke="#383838" stroke-width="0.91"/></svg>
<svg class="a" style="left:15.2px;top:79.3px" width="10" height="10" viewBox="0 0 10 10"><path d="M2 6l3-3 3 3M2 8h6" fill="none" stroke="#383838" stroke-width="0.84"/></svg>
<svg class="a" style="left:15.2px;top:90.3px" width="10" height="10" viewBox="0 0 10 10"><path d="M1 7h8v2H1z" fill="#222"/><path d="M2 3h5l-1.5 3z" fill="#d0b030"/></svg>
<svg class="a" style="left:15.2px;top:101.3px" width="10" height="10" viewBox="0 0 10 10"><path d="M1.5 1.5h2v2h-2zM6.5 1.5h2v2h-2zM1.5 6.5h2v2h-2zM6.5 6.5h2v2h-2z" fill="#2a6ab0"/></svg>
<svg class="a" style="left:15.2px;top:112.3px" width="10" height="10" viewBox="0 0 10 10"><path d="M5 1v8M1 5h8" fill="none" stroke="#383838" stroke-width="0.84"/><path d="M5 0l2 2H3zM5 10l2-2H3zM0 5l2-2v4zM10 5l-2-2v4z" fill="#383838"/></svg>
<svg class="a" style="left:15.2px;top:123.3px" width="10" height="10" viewBox="0 0 10 10"><path d="M8 5a3 3 0 1 1-3-3" fill="none" stroke="#383838" stroke-width="0.91"/><path d="M4 0l3 2-3 2z" fill="#383838"/></svg>
<svg class="a" style="left:15.2px;top:134.3px" width="10" height="10" viewBox="0 0 10 10"><path d="M1.5 1.5h7v7h-7z" fill="#9aa"/><path d="M1.5 1.5h3.5v7H1.5z" fill="#456"/></svg>
<svg class="a" style="left:15.2px;top:145.3px" width="10" height="10" viewBox="0 0 10 10"><path d="M1.5 1.5h7v7h-7z" fill="#3a70c0"/><path d="M3 7V3h4" fill="none" stroke="#fff" stroke-width="0.84"/></svg>
<svg class="a" style="left:15.2px;top:156.3px" width="10" height="10" viewBox="0 0 10 10"><path d="M1.5 2h7v6h-7z" fill="none" stroke="#555" stroke-width="0.77"/><path d="M2 5h6v3H2z" fill="#aac"/></svg>
<svg class="a" style="left:15.2px;top:167.3px" width="10" height="10" viewBox="0 0 10 10"><path d="M1 7l3-3M6 3l3-2" fill="none" stroke="#383838" stroke-width="0.91"/><path d="M4 4h2v-1" fill="#333"/></svg>
<svg class="a" style="left:15.2px;top:178.3px" width="10" height="10" viewBox="0 0 10 10"><path d="M1 8h8M5 1v6" fill="none" stroke="#383838" stroke-width="0.84"/><path d="M4 6l1 2 1-2z" fill="#383838"/></svg>
<svg class="a" style="left:15.2px;top:189.3px" width="10" height="10" viewBox="0 0 10 10"><path d="M1.5 2h7M1.5 8h7M2 2v6M5 5h4" fill="none" stroke="#383838" stroke-width="0.84"/></svg>
<svg class="a" style="left:15.2px;top:200.3px" width="10" height="10" viewBox="0 0 10 10"><path d="M1.5 8.5V4L4 1.5h4.5" fill="none" stroke="#383838" stroke-width="0.91"/></svg>
<svg class="a" style="left:15.2px;top:211.3px" width="10" height="10" viewBox="0 0 10 10"><path d="M1 8h8M5 1v6" fill="none" stroke="#383838" stroke-width="0.84"/><path d="M4 6l1 2 1-2z" fill="#383838"/></svg>
<svg class="a" style="left:15.2px;top:222.3px" width="10" height="10" viewBox="0 0 10 10"><path d="M1.5 8.5V5C1.5 3 3 1.5 5 1.5h3.5" fill="none" stroke="#383838" stroke-width="0.91"/></svg>
<svg class="a" style="left:15.2px;top:233.3px" width="10" height="10" viewBox="0 0 10 10"><path d="M1 5c1.5-3 2.5 3 4 0s2.5 3 4 0" fill="none" stroke="#383838" stroke-width="0.91"/></svg>
<svg class="a" style="left:15.2px;top:244.3px" width="10" height="10" viewBox="0 0 10 10"><path d="M1.5 8.5V4L4 1.5h4.5" fill="none" stroke="#383838" stroke-width="0.91"/></svg>
<div class="a" style="left:14.7px;top:256px;width:11.4px;height:101px;background:linear-gradient(90deg,#f3f4f6,#e6e9ec)"></div>
<div class="a" style="left:26.700000000000003px;top:256px;width:1.2px;height:101px;background:#74787d"></div>
<div class="a" style="left:15.899999999999999px;top:256.8px;width:7px;height:2px;background:#2a2d31"></div>
<svg class="a" style="left:15.2px;top:261px" width="10" height="10" viewBox="0 0 10 10"><path d="M1.5 1.5h7v7h-7z" fill="#3a70c0"/><path d="M3 7V3h4" fill="none" stroke="#fff" stroke-width="0.84"/></svg>
<svg class="a" style="left:15.2px;top:272px" width="10" height="10" viewBox="0 0 10 10"><path d="M5 5m-3.5 0a3.5 3.5 0 1 0 7 0a3.5 3.5 0 1 0-7 0" fill="none" stroke="#383838" stroke-width="0.77"/></svg>
<svg class="a" style="left:15.2px;top:283px" width="10" height="10" viewBox="0 0 10 10"><path d="M5 5m-3.5 0a3.5 3.5 0 1 0 7 0a3.5 3.5 0 1 0-7 0" fill="none" stroke="#383838" stroke-width="0.77"/></svg>
<svg class="a" style="left:15.2px;top:294px" width="10" height="10" viewBox="0 0 10 10"><path d="M2 8.5l3-7 3 7M3 6h4" fill="none" stroke="#333" stroke-width="0.91"/><path d="M5 9l4-4" fill="none" stroke="#a06020" stroke-width="0.84"/></svg>
<svg class="a" style="left:15.2px;top:305px" width="10" height="10" viewBox="0 0 10 10"><path d="M8 5a3 3 0 1 1-3-3" fill="none" stroke="#383838" stroke-width="0.91"/><path d="M4 0l3 2-3 2z" fill="#383838"/></svg>
<svg class="a" style="left:15.2px;top:316px" width="10" height="10" viewBox="0 0 10 10"><path d="M8 5a3 3 0 1 1-3-3" fill="none" stroke="#383838" stroke-width="0.91"/><path d="M4 0l3 2-3 2z" fill="#383838"/></svg>
<svg class="a" style="left:15.2px;top:327px" width="10" height="10" viewBox="0 0 10 10"><path d="M4.2 4.2m-2.7 0a2.7 2.7 0 1 0 5.4 0a2.7 2.7 0 1 0-5.4 0" fill="none" stroke="#383838" stroke-width="0.91"/><path d="M6.3 6.3l2.5 2.5" fill="none" stroke="#383838" stroke-width="1.12"/></svg>
<svg class="a" style="left:15.2px;top:338px" width="10" height="10" viewBox="0 0 10 10"><path d="M1.5 1.5h7v7h-7z" fill="#777"/><path d="M1.5 5l3.5-3.5M1.5 8.5l7-7M5 8.5l3.5-3.5" fill="none" stroke="#ccc" stroke-width="0.7"/></svg>
<div class="a" style="left:14.7px;top:358px;width:11.4px;height:77px;background:linear-gradient(90deg,#f3f4f6,#e6e9ec)"></div>
<div class="a" style="left:26.700000000000003px;top:358px;width:1.2px;height:77px;background:#74787d"></div>
<div class="a" style="left:15.899999999999999px;top:358.8px;width:7px;height:2px;background:#2a2d31"></div>
<svg class="a" style="left:15.2px;top:363px" width="10" height="10" viewBox="0 0 10 10"><path d="M8 5a3 3 0 1 1-3-3" fill="none" stroke="#383838" stroke-width="0.91"/><path d="M4 0l3 2-3 2z" fill="#383838"/></svg>
<svg class="a" style="left:15.2px;top:374px" width="10" height="10" viewBox="0 0 10 10"><path d="M5 1v3M5 6v3M1 5h3M6 5h3M2 2l2 2M6 6l2 2" fill="none" stroke="#e09020" stroke-width="0.77"/></svg>
<svg class="a" style="left:15.2px;top:385px" width="10" height="10" viewBox="0 0 10 10"><path d="M1 8L9 2M1 2l4 3" fill="none" stroke="#383838" stroke-width="0.84"/><path d="M6 5h2v2H6z" fill="#d03030"/></svg>
<svg class="a" style="left:15.2px;top:396px" width="10" height="10" viewBox="0 0 10 10"><path d="M5 1v3M5 6v3M1 5h3M6 5h3M2 2l2 2M6 6l2 2" fill="none" stroke="#e09020" stroke-width="0.77"/></svg>
<svg class="a" style="left:15.2px;top:407px" width="10" height="10" viewBox="0 0 10 10"><path d="M8 5a3 3 0 1 1-3-3" fill="none" stroke="#383838" stroke-width="0.91"/><path d="M4 0l3 2-3 2z" fill="#383838"/></svg>
<svg class="a" style="left:15.2px;top:418px" width="10" height="10" viewBox="0 0 10 10"><path d="M5 5m-3.5 0a3.5 3.5 0 1 0 7 0a3.5 3.5 0 1 0-7 0" fill="none" stroke="#383838" stroke-width="0.77"/></svg>
<div class="a" style="left:28.8px;top:52.3px;width:11.4px;height:215.7px;background:linear-gradient(90deg,#f3f4f6,#e6e9ec)"></div>
<div class="a" style="left:40.800000000000004px;top:52.3px;width:1.2px;height:215.7px;background:#74787d"></div>
<div class="a" style="left:30.0px;top:53.099999999999994px;width:7px;height:2px;background:#2a2d31"></div>
<svg class="a" style="left:29.3px;top:57.3px" width="10" height="10" viewBox="0 0 10 10"><path d="M1 9L9 1" fill="none" stroke="#383838" stroke-width="0.91"/><path d="M1 7h2.5v2.5H1z" fill="#383838"/></svg>
<svg class="a" style="left:29.3px;top:68.3px" width="10" height="10" viewBox="0 0 10 10"><path d="M1 8L8 2" fill="none" stroke="#383838" stroke-width="0.91"/><path d="M1 7h2v2H1z M4 4.5h2v2H4z" fill="#383838"/></svg>
<svg class="a" style="left:29.3px;top:79.3px" width="10" height="10" viewBox="0 0 10 10"><path d="M1.5 9C2 4 5 2 9 1.5" fill="none" stroke="#383838" stroke-width="0.91"/><path d="M1 7.5h2V9.5H1z" fill="#383838"/></svg>
<svg class="a" style="left:29.3px;top:90.3px" width="10" height="10" viewBox="0 0 10 10"><path d="M5 1.5l3.5 2.5-1.3 4H2.8L1.5 4z" fill="none" stroke="#383838" stroke-width="0.77"/></svg>
<svg class="a" style="left:29.3px;top:101.3px" width="10" height="10" viewBox="0 0 10 10"><path d="M1.5 2.5h7v5h-7z" fill="none" stroke="#383838" stroke-width="0.84"/><path d="M1 7h2v2H1z" fill="#383838"/></svg>
<svg class="a" style="left:29.3px;top:112.3px" width="10" height="10" viewBox="0 0 10 10"><path d="M1.5 9C2 4 5 2 9 1.5" fill="none" stroke="#383838" stroke-width="0.91"/><path d="M1 7.5h2V9.5H1z" fill="#383838"/></svg>
<svg class="a" style="left:29.3px;top:123.3px" width="10" height="10" viewBox="0 0 10 10"><path d="M5 5m-3.5 0a3.5 3.5 0 1 0 7 0a3.5 3.5 0 1 0-7 0" fill="none" stroke="#383838" stroke-width="0.84"/><path d="M4.3 4.3h1.4v1.4H4.3z" fill="#383838"/></svg>
<svg class="a" style="left:29.3px;top:134.3px" width="10" height="10" viewBox="0 0 10 10"><path d="M2 6c-1-2 1-4 3-3 1-2 4-1 3 1 2 1 0 4-2 3-1 2-4 1-4-1z" fill="none" stroke="#383838" stroke-width="0.7"/></svg>
<svg class="a" style="left:29.3px;top:145.3px" width="10" height="10" viewBox="0 0 10 10"><path d="M1 6c2-4 3 2 5-1s2-2 3-2" fill="none" stroke="#383838" stroke-width="0.84"/></svg>
<svg class="a" style="left:29.3px;top:156.3px" width="10" height="10" viewBox="0 0 10 10"><path d="M5 5m-4 0a4 2.5 0 1 0 8 0a4 2.5 0 1 0-8 0" fill="none" stroke="#383838" stroke-width="0.84"/></svg>
<svg class="a" style="left:29.3px;top:167.3px" width="10" height="10" viewBox="0 0 10 10"><path d="M5 5m-4 0a4 2.5 0 1 0 8 0a4 2.5 0 1 0-8 0" fill="none" stroke="#383838" stroke-width="0.84"/></svg>
<svg class="a" style="left:29.3px;top:178.3px" width="10" height="10" viewBox="0 0 10 10"><path d="M5 5m-3.5 0a3.5 3.5 0 1 0 7 0a3.5 3.5 0 1 0-7 0" fill="none" stroke="#383838" stroke-width="0.77"/></svg>
<svg class="a" style="left:29.3px;top:189.3px" width="10" height="10" viewBox="0 0 10 10"><path d="M1 9C1 4 4 2 8 1.5M3 9l2-2M6 3.5l2 2" fill="none" stroke="#383838" stroke-width="0.98"/></svg>
<svg class="a" style="left:29.3px;top:200.3px" width="10" height="10" viewBox="0 0 10 10"><path d="M4 4h2v2H4z" fill="#383838"/></svg>
<svg class="a" style="left:29.3px;top:211.3px" width="10" height="10" viewBox="0 0 10 10"><path d="M1.5 1.5h7v7h-7z" fill="#777"/><path d="M1.5 5l3.5-3.5M1.5 8.5l7-7M5 8.5l3.5-3.5" fill="none" stroke="#ccc" stroke-width="0.7"/></svg>
<svg class="a" style="left:29.3px;top:222.3px" width="10" height="10" viewBox="0 0 10 10"><path d="M1.5 1.5h7v7h-7z" fill="#9aa"/><path d="M1.5 1.5h3.5v7H1.5z" fill="#456"/></svg>
<svg class="a" style="left:29.3px;top:233.3px" width="10" height="10" viewBox="0 0 10 10"><path d="M1.5 2h7v6h-7z" fill="none" stroke="#555" stroke-width="0.77"/><path d="M2 5h6v3H2z" fill="#aac"/></svg>
<svg class="a" style="left:29.3px;top:244.3px" width="10" height="10" viewBox="0 0 10 10"><path d="M1.5 1.5h7v7h-7zM1.5 4h7M1.5 6.5h7M4.5 4v4.5" fill="none" stroke="#383838" stroke-width="0.7"/></svg>
<svg class="a" style="left:29.3px;top:255.3px" width="10" height="10" viewBox="0 0 10 10"><path d="M2 9L5 1l3 8M3.2 6h3.6" fill="none" stroke="#383838" stroke-width="0.91"/></svg>
<div class="a" style="left:28.8px;top:269px;width:11.4px;height:33px;background:linear-gradient(90deg,#f3f4f6,#e6e9ec)"></div>
<div class="a" style="left:40.800000000000004px;top:269px;width:1.2px;height:33px;background:#74787d"></div>
<div class="a" style="left:30.0px;top:269.8px;width:7px;height:2px;background:#2a2d31"></div>
<svg class="a" style="left:29.3px;top:274px" width="10" height="10" viewBox="0 0 10 10"><path d="M1 5c1.5-3 2.5 3 4 0s2.5 3 4 0" fill="none" stroke="#383838" stroke-width="0.91"/></svg>
<svg class="a" style="left:29.3px;top:285px" width="10" height="10" viewBox="0 0 10 10"><path d="M2 8.5V2M2 8.5h6.5M2 8.5l4-4" fill="none" stroke="#383838" stroke-width="0.84"/></svg>
<div class="a" style="left:28.8px;top:303px;width:11.4px;height:48px;background:linear-gradient(90deg,#f3f4f6,#e6e9ec)"></div>
<div class="a" style="left:40.800000000000004px;top:303px;width:1.2px;height:48px;background:#74787d"></div>
<div class="a" style="left:30.0px;top:303.8px;width:7px;height:2px;background:#2a2d31"></div>
<svg class="a" style="left:29.3px;top:308px" width="10" height="10" viewBox="0 0 10 10"><path d="M2 8.5V2M2 8.5h6.5" fill="none" stroke="#383838" stroke-width="0.84"/><path d="M1 1.5h2v2H1z" fill="#d02020"/></svg>
<svg class="a" style="left:29.3px;top:319px" width="10" height="10" viewBox="0 0 10 10"><path d="M1.5 1.5h7v7h-7z" fill="#3a70c0"/><path d="M3 7V3h4" fill="none" stroke="#fff" stroke-width="0.84"/></svg>
<svg class="a" style="left:29.3px;top:330px" width="10" height="10" viewBox="0 0 10 10"><path d="M2 1.5v7h6.5" fill="none" stroke="#1a3a80" stroke-width="1.12"/><path d="M2 8.5L6 4" fill="none" stroke="#1a3a80" stroke-width="0.84"/></svg>
<svg class="a" style="left:29.3px;top:341px" width="10" height="10" viewBox="0 0 10 10"><path d="M1.5 6.5h4v-4M4 8.5h5v-5" fill="none" stroke="#383838" stroke-width="0.84"/></svg>
<div class="a" style="left:44px;top:52.5px;width:756px;height:474.5px;background:#000"></div>
<svg class="a" style="left:0;top:0" width="800" height="600">
<defs><linearGradient id="gg" x1="0" x2="1"><stop offset="0" stop-color="#0a8a0a"/><stop offset=".45" stop-color="#38e838"/><stop offset="1" stop-color="#078807"/></linearGradient><linearGradient id="gc" x1="0" x2="1"><stop offset="0" stop-color="#10b010"/><stop offset=".35" stop-color="#50ff50"/><stop offset="1" stop-color="#0a9a0a"/></linearGradient><linearGradient id="bc" x1="0" y1="0" x2="0.3" y2="1"><stop offset="0" stop-color="#2a80d0"/><stop offset=".6" stop-color="#5cc0ff"/><stop offset="1" stop-color="#1a6ac8"/></linearGradient><linearGradient id="rc" x1="0" y1="0" x2="1" y2="1"><stop offset="0" stop-color="#b00606"/><stop offset="1" stop-color="#d01010"/></linearGradient></defs>
<clipPath id="dc"><rect x="44" y="52.5" width="756" height="474.5"/></clipPath><g clip-path="url(#dc)">
<line x1="286.5" y1="52" x2="286.5" y2="527" stroke="#9a9a9a" stroke-width="1"/>
<polygon points="167.0,216.6 174.0,220.6 174.0,353.8 167.0,349.8" fill="#08b408"/>
<line x1="167.8" y1="217.6" x2="167.8" y2="349.8" stroke="#58d858" stroke-width="1.3"/>
<line x1="172.8" y1="221.6" x2="172.8" y2="353.8" stroke="#50d050" stroke-width="1"/>
<polygon points="177.1,222.4 183.1,225.8 183.1,359.1 177.1,355.6" fill="#08b408"/>
<line x1="177.9" y1="223.4" x2="177.9" y2="355.6" stroke="#58d858" stroke-width="1.3"/>
<line x1="181.9" y1="226.8" x2="181.9" y2="359.1" stroke="#50d050" stroke-width="1"/>
<polygon points="187.3,228.2 193.3,231.6 193.3,364.9 187.3,361.5" fill="#08b408"/>
<line x1="188.1" y1="229.2" x2="188.1" y2="361.5" stroke="#58d858" stroke-width="1.3"/>
<line x1="192.1" y1="232.6" x2="192.1" y2="364.9" stroke="#50d050" stroke-width="1"/>
<polygon points="197.4,234.0 203.4,237.4 203.4,370.8 197.4,367.3" fill="#08b408"/>
<line x1="198.2" y1="235.0" x2="198.2" y2="367.3" stroke="#58d858" stroke-width="1.3"/>
<line x1="202.2" y1="238.4" x2="202.2" y2="370.8" stroke="#50d050" stroke-width="1"/>
<polygon points="207.6,239.8 213.6,243.2 213.6,376.6 207.6,373.1" fill="#08b408"/>
<line x1="208.4" y1="240.8" x2="208.4" y2="373.1" stroke="#58d858" stroke-width="1.3"/>
<line x1="212.4" y1="244.2" x2="212.4" y2="376.6" stroke="#50d050" stroke-width="1"/>
<polygon points="217.7,245.6 223.7,249.1 223.7,382.4 217.7,379.0" fill="#08b408"/>
<line x1="218.5" y1="246.6" x2="218.5" y2="379.0" stroke="#58d858" stroke-width="1.3"/>
<line x1="222.5" y1="250.1" x2="222.5" y2="382.4" stroke="#50d050" stroke-width="1"/>
<polygon points="227.8,251.4 233.8,254.9 233.8,388.3 227.8,384.8" fill="#08b408"/>
<line x1="228.6" y1="252.4" x2="228.6" y2="384.8" stroke="#58d858" stroke-width="1.3"/>
<line x1="232.6" y1="255.9" x2="232.6" y2="388.3" stroke="#50d050" stroke-width="1"/>
<polygon points="238.0,257.2 244.0,260.7 244.0,394.1 238.0,390.6" fill="#08b408"/>
<line x1="238.8" y1="258.2" x2="238.8" y2="390.6" stroke="#58d858" stroke-width="1.3"/>
<line x1="242.8" y1="261.7" x2="242.8" y2="394.1" stroke="#50d050" stroke-width="1"/>
<polygon points="248.1,263.0 254.1,266.5 254.1,399.9 248.1,396.5" fill="#08b408"/>
<line x1="248.9" y1="264.0" x2="248.9" y2="396.5" stroke="#58d858" stroke-width="1.3"/>
<line x1="252.9" y1="267.5" x2="252.9" y2="399.9" stroke="#50d050" stroke-width="1"/>
<polygon points="258.3,268.9 264.3,272.3 264.3,405.8 258.3,402.3" fill="#08b408"/>
<line x1="259.1" y1="269.9" x2="259.1" y2="402.3" stroke="#58d858" stroke-width="1.3"/>
<line x1="263.1" y1="273.3" x2="263.1" y2="405.8" stroke="#50d050" stroke-width="1"/>
<polygon points="268.4,274.7 274.4,278.1 274.4,411.6 268.4,408.1" fill="#08b408"/>
<line x1="269.2" y1="275.7" x2="269.2" y2="408.1" stroke="#58d858" stroke-width="1.3"/>
<line x1="273.2" y1="279.1" x2="273.2" y2="411.6" stroke="#50d050" stroke-width="1"/>
<polygon points="278.5,280.5 284.5,283.9 284.5,417.4 278.5,414.0" fill="#08b408"/>
<line x1="279.3" y1="281.5" x2="279.3" y2="414.0" stroke="#58d858" stroke-width="1.3"/>
<line x1="283.3" y1="284.9" x2="283.3" y2="417.4" stroke="#50d050" stroke-width="1"/>
<polygon points="288.7,286.3 294.7,289.7 294.7,423.3 288.7,419.8" fill="#08b408"/>
<line x1="289.5" y1="287.3" x2="289.5" y2="419.8" stroke="#58d858" stroke-width="1.3"/>
<line x1="293.5" y1="290.7" x2="293.5" y2="423.3" stroke="#50d050" stroke-width="1"/>
<polygon points="298.8,292.1 304.8,295.5 304.8,429.1 298.8,425.6" fill="#08b408"/>
<line x1="299.6" y1="293.1" x2="299.6" y2="425.6" stroke="#58d858" stroke-width="1.3"/>
<line x1="303.6" y1="296.5" x2="303.6" y2="429.1" stroke="#50d050" stroke-width="1"/>
<polygon points="309.0,303.1 319.0,297.3 319.0,429.1 309.0,434.8" fill="#08b408"/>
<line x1="309.8" y1="304.1" x2="309.8" y2="434.8" stroke="#58d858" stroke-width="1.3"/>
<line x1="317.8" y1="298.3" x2="317.8" y2="429.1" stroke="#50d050" stroke-width="1"/>
<polygon points="323.0,295.1 329.0,291.6 329.0,423.4 323.0,426.8" fill="#08b408"/>
<line x1="323.8" y1="296.1" x2="323.8" y2="426.8" stroke="#58d858" stroke-width="1.3"/>
<line x1="327.8" y1="292.6" x2="327.8" y2="423.4" stroke="#50d050" stroke-width="1"/>
<polygon points="333.3,289.2 339.3,285.7 339.3,417.5 333.3,420.9" fill="#08b408"/>
<line x1="334.1" y1="290.2" x2="334.1" y2="420.9" stroke="#58d858" stroke-width="1.3"/>
<line x1="338.1" y1="286.7" x2="338.1" y2="417.5" stroke="#50d050" stroke-width="1"/>
<polygon points="343.5,283.3 349.5,279.9 349.5,411.6 343.5,415.1" fill="#08b408"/>
<line x1="344.3" y1="284.3" x2="344.3" y2="415.1" stroke="#58d858" stroke-width="1.3"/>
<line x1="348.3" y1="280.9" x2="348.3" y2="411.6" stroke="#50d050" stroke-width="1"/>
<polygon points="353.8,277.4 359.8,274.0 359.8,405.8 353.8,409.2" fill="#08b408"/>
<line x1="354.6" y1="278.4" x2="354.6" y2="409.2" stroke="#58d858" stroke-width="1.3"/>
<line x1="358.6" y1="275.0" x2="358.6" y2="405.8" stroke="#50d050" stroke-width="1"/>
<polygon points="364.0,271.5 370.0,268.1 370.0,399.9 364.0,403.3" fill="#08b408"/>
<line x1="364.8" y1="272.5" x2="364.8" y2="403.3" stroke="#58d858" stroke-width="1.3"/>
<line x1="368.8" y1="269.1" x2="368.8" y2="399.9" stroke="#50d050" stroke-width="1"/>
<polygon points="374.3,265.7 380.3,262.2 380.3,394.0 374.3,397.5" fill="#08b408"/>
<line x1="375.1" y1="266.7" x2="375.1" y2="397.5" stroke="#58d858" stroke-width="1.3"/>
<line x1="379.1" y1="263.2" x2="379.1" y2="394.0" stroke="#50d050" stroke-width="1"/>
<polygon points="384.6,259.8 390.6,256.3 390.6,388.2 384.6,391.6" fill="#08b408"/>
<line x1="385.4" y1="260.8" x2="385.4" y2="391.6" stroke="#58d858" stroke-width="1.3"/>
<line x1="389.4" y1="257.3" x2="389.4" y2="388.2" stroke="#50d050" stroke-width="1"/>
<polygon points="394.8,253.9 400.8,250.5 400.8,382.3 394.8,385.7" fill="#08b408"/>
<line x1="395.6" y1="254.9" x2="395.6" y2="385.7" stroke="#58d858" stroke-width="1.3"/>
<line x1="399.6" y1="251.5" x2="399.6" y2="382.3" stroke="#50d050" stroke-width="1"/>
<polygon points="405.1,248.0 411.1,244.6 411.1,376.4 405.1,379.9" fill="#08b408"/>
<line x1="405.9" y1="249.0" x2="405.9" y2="379.9" stroke="#58d858" stroke-width="1.3"/>
<line x1="409.9" y1="245.6" x2="409.9" y2="376.4" stroke="#50d050" stroke-width="1"/>
<polygon points="415.3,242.1 421.3,238.7 421.3,370.6 415.3,374.0" fill="#08b408"/>
<line x1="416.1" y1="243.1" x2="416.1" y2="374.0" stroke="#58d858" stroke-width="1.3"/>
<line x1="420.1" y1="239.7" x2="420.1" y2="370.6" stroke="#50d050" stroke-width="1"/>
<polygon points="425.6,236.2 431.6,232.8 431.6,364.7 425.6,368.1" fill="#08b408"/>
<line x1="426.4" y1="237.2" x2="426.4" y2="368.1" stroke="#58d858" stroke-width="1.3"/>
<line x1="430.4" y1="233.8" x2="430.4" y2="364.7" stroke="#50d050" stroke-width="1"/>
<polygon points="435.9,230.4 441.9,226.9 441.9,358.8 435.9,362.3" fill="#08b408"/>
<line x1="436.7" y1="231.4" x2="436.7" y2="362.3" stroke="#58d858" stroke-width="1.3"/>
<line x1="440.7" y1="227.9" x2="440.7" y2="358.8" stroke="#50d050" stroke-width="1"/>
<polygon points="446.1,224.5 452.1,221.0 452.1,353.0 446.1,356.4" fill="#08b408"/>
<line x1="446.9" y1="225.5" x2="446.9" y2="356.4" stroke="#58d858" stroke-width="1.3"/>
<line x1="450.9" y1="222.0" x2="450.9" y2="353.0" stroke="#50d050" stroke-width="1"/>
<polygon points="456.4,218.6 462.4,215.2 462.4,347.1 456.4,350.5" fill="#08b408"/>
<line x1="457.2" y1="219.6" x2="457.2" y2="350.5" stroke="#58d858" stroke-width="1.3"/>
<line x1="461.2" y1="216.2" x2="461.2" y2="347.1" stroke="#50d050" stroke-width="1"/>
<polygon points="466.6,212.7 472.6,209.3 472.6,341.2 466.6,344.7" fill="#08b408"/>
<line x1="467.4" y1="213.7" x2="467.4" y2="344.7" stroke="#58d858" stroke-width="1.3"/>
<line x1="471.4" y1="210.3" x2="471.4" y2="341.2" stroke="#50d050" stroke-width="1"/>
<polygon points="476.9,206.8 482.9,203.4 482.9,335.4 476.9,338.8" fill="#08b408"/>
<line x1="477.7" y1="207.8" x2="477.7" y2="338.8" stroke="#58d858" stroke-width="1.3"/>
<line x1="481.7" y1="204.4" x2="481.7" y2="335.4" stroke="#50d050" stroke-width="1"/>
<polygon points="487.2,201.0 493.2,197.5 493.2,329.5 487.2,332.9" fill="#08b408"/>
<line x1="488.0" y1="202.0" x2="488.0" y2="332.9" stroke="#58d858" stroke-width="1.3"/>
<line x1="492.0" y1="198.5" x2="492.0" y2="329.5" stroke="#50d050" stroke-width="1"/>
<polygon points="497.4,195.1 503.4,191.6 503.4,323.6 497.4,327.1" fill="#08b408"/>
<line x1="498.2" y1="196.1" x2="498.2" y2="327.1" stroke="#58d858" stroke-width="1.3"/>
<line x1="502.2" y1="192.6" x2="502.2" y2="323.6" stroke="#50d050" stroke-width="1"/>
<polygon points="507.7,189.2 513.7,185.8 513.7,317.8 507.7,321.2" fill="#08b408"/>
<line x1="508.5" y1="190.2" x2="508.5" y2="321.2" stroke="#58d858" stroke-width="1.3"/>
<line x1="512.5" y1="186.8" x2="512.5" y2="317.8" stroke="#50d050" stroke-width="1"/>
<polygon points="517.9,183.3 523.9,179.9 523.9,311.9 517.9,315.3" fill="#08b408"/>
<line x1="518.7" y1="184.3" x2="518.7" y2="315.3" stroke="#58d858" stroke-width="1.3"/>
<line x1="522.7" y1="180.9" x2="522.7" y2="311.9" stroke="#50d050" stroke-width="1"/>
<polygon points="528.2,177.4 534.2,174.0 534.2,306.0 528.2,309.5" fill="#08b408"/>
<line x1="529.0" y1="178.4" x2="529.0" y2="309.5" stroke="#58d858" stroke-width="1.3"/>
<line x1="533.0" y1="175.0" x2="533.0" y2="306.0" stroke="#50d050" stroke-width="1"/>
<polygon points="538.5,171.6 544.5,168.1 544.5,300.2 538.5,303.6" fill="#08b408"/>
<line x1="539.3" y1="172.6" x2="539.3" y2="303.6" stroke="#58d858" stroke-width="1.3"/>
<line x1="543.3" y1="169.1" x2="543.3" y2="300.2" stroke="#50d050" stroke-width="1"/>
<polygon points="548.7,165.7 554.7,162.2 554.7,294.3 548.7,297.7" fill="#08b408"/>
<line x1="549.5" y1="166.7" x2="549.5" y2="297.7" stroke="#58d858" stroke-width="1.3"/>
<line x1="553.5" y1="163.2" x2="553.5" y2="294.3" stroke="#50d050" stroke-width="1"/>
<polygon points="559.0,159.8 565.0,156.4 565.0,288.4 559.0,291.9" fill="#08b408"/>
<line x1="559.8" y1="160.8" x2="559.8" y2="291.9" stroke="#58d858" stroke-width="1.3"/>
<line x1="563.8" y1="157.4" x2="563.8" y2="288.4" stroke="#50d050" stroke-width="1"/>
<polygon points="569.2,153.9 575.2,150.5 575.2,282.6 569.2,286.0" fill="#08b408"/>
<line x1="570.0" y1="154.9" x2="570.0" y2="286.0" stroke="#58d858" stroke-width="1.3"/>
<line x1="574.0" y1="151.5" x2="574.0" y2="282.6" stroke="#50d050" stroke-width="1"/>
<polygon points="579.5,148.0 585.5,144.6 585.5,276.7 579.5,280.1" fill="#08b408"/>
<line x1="580.3" y1="149.0" x2="580.3" y2="280.1" stroke="#58d858" stroke-width="1.3"/>
<line x1="584.3" y1="145.6" x2="584.3" y2="276.7" stroke="#50d050" stroke-width="1"/>
<polygon points="589.8,142.2 595.8,138.7 595.8,270.9 589.8,274.3" fill="#08b408"/>
<line x1="590.6" y1="143.2" x2="590.6" y2="274.3" stroke="#58d858" stroke-width="1.3"/>
<line x1="594.6" y1="139.7" x2="594.6" y2="270.9" stroke="#50d050" stroke-width="1"/>
<polygon points="600.0,136.3 606.0,132.8 606.0,265.0 600.0,268.4" fill="#08b408"/>
<line x1="600.8" y1="137.3" x2="600.8" y2="268.4" stroke="#58d858" stroke-width="1.3"/>
<line x1="604.8" y1="133.8" x2="604.8" y2="265.0" stroke="#50d050" stroke-width="1"/>
<polygon points="166.0,211.0 313.5,295.5 604.0,129.0 604.0,135.0 313.5,301.5 166.0,217.0" fill="#e39e0c"/>
<polyline points="166.0,215.5 313.5,300.0 604.0,133.5" fill="none" stroke="#f0b020" stroke-width="1.2" opacity=".8"/>
<polyline points="166.0,217.0 313.5,301.5 604.0,135.0" fill="none" stroke="#b8e048" stroke-width="1"/>
<polygon points="167.0,349.3 313.0,432.3 606.0,264.5 606.0,270.0 313.0,437.5 167.0,353.5" fill="#22dd22"/>
<polyline points="167.0,349.3 313.0,432.3 606.0,264.5" fill="none" stroke="#66ff66" stroke-width="1"/>
<polyline points="167.0,353.5 313.0,437.5 606.0,270.0" fill="none" stroke="#60f060" stroke-width="1" stroke-dasharray="1.2 0.8"/>

<path d="M179 66L192 78L205 67M192 78V91" fill="none" stroke="#6a8c44" stroke-width="1"/>
<path d="M265.5 115L289 140M291 115L265.5 141" fill="none" stroke="#a03232" stroke-width="1"/>
<path d="M267 208H290L267 232.5H290" fill="none" stroke="#5a76a6" stroke-width="1"/>
<line x1="286.5" y1="52" x2="286.5" y2="527" stroke="#c8c8c8" stroke-width="1" opacity=".3"/>
<line x1="108" y1="526" x2="800" y2="126.5" stroke="#eaeaea" stroke-width="1" stroke-dasharray="1.6 0.7"/>
<line x1="167" y1="353.5" x2="300" y2="430" stroke="#ffffff" stroke-width="0.9" stroke-dasharray="1.3 1.3" opacity=".7"/>
<rect x="163" y="150" width="10" height="69" fill="#1cbc1c"/><rect x="164" y="150" width="2" height="69" fill="#28cc28"/>
<path d="M168 105L151 151Q168 163 185 151Z" fill="url(#gc)"/>
<defs><linearGradient id="rs" x1="0" y1="0" x2="0" y2="1"><stop offset="0" stop-color="#ff6a6a"/><stop offset=".35" stop-color="#f02424"/><stop offset="1" stop-color="#b80c0c"/></linearGradient><linearGradient id="bsh" x1="0" y1="0" x2="0" y2="1"><stop offset="0" stop-color="#a8e8ff"/><stop offset=".35" stop-color="#5cc4fa"/><stop offset="1" stop-color="#1c78d0"/></linearGradient></defs>
<g transform="translate(173.50 214.00) rotate(-27.92)"><rect x="0" y="-4.25" width="66.21" height="8.50" fill="url(#rs)"/></g>
<path d="M219 166Q211 189 236 198L265 162Z" fill="url(#rc)"/>
<g transform="translate(165.00 216.50) rotate(29.13)"><rect x="0" y="-4.25" width="69.84" height="8.50" fill="url(#bsh)"/></g>
<g transform="translate(226 253) rotate(28.80)"><path d="M0 -15.5L43 0L0 15.5Z" fill="url(#bc)"/><ellipse cx="0" cy="0" rx="6" ry="15.5" fill="url(#bc)"/></g>
</g></svg>
<div class="a" style="left:295px;top:432px;width:79px;height:54px;background:linear-gradient(#fdfdfe,#e8e8f0);border:1px solid #dadae2"></div>
<div class="a" style="left:300px;top:437px;font-size:6.2px;line-height:8px;color:#3a3a3a;white-space:nowrap;font-weight:bold">3D Solid</div>
<div class="a" style="left:300px;top:448.5px;font-size:6.2px;line-height:8px;color:#3a3a3a;white-space:nowrap">Color</div>
<div class="a" style="left:329px;top:450px;width:5px;height:5px;background:#10d010;border:1px solid #060"></div>
<div class="a" style="left:336px;top:448.5px;font-size:6.2px;line-height:8px;color:#3a3a3a;white-space:nowrap">ByLayer</div>
<div class="a" style="left:300px;top:459px;font-size:6.2px;line-height:8px;color:#3a3a3a;white-space:nowrap">Layer</div>
<div class="a" style="left:329px;top:459px;font-size:6.2px;line-height:8px;color:#3a3a3a;white-space:nowrap">GN</div>
<div class="a" style="left:300px;top:470px;font-size:6.2px;line-height:8px;color:#3a3a3a;white-space:nowrap">Linetype</div>
<div class="a" style="left:329px;top:470px;font-size:6.2px;line-height:8px;color:#3a3a3a;white-space:nowrap">CONTINUOUS</div>
<div class="a" style="left:44px;top:527px;width:756px;height:8px;background:linear-gradient(#f4f4f2,#ececef)"></div>
<div class="a" style="left:0;top:534.5px;width:800px;height:2.5px;background:linear-gradient(#c8cacd,#9a9ea3)"></div>
<div class="a" style="left:44px;top:527px;width:31px;height:7.5px;border:1px solid #b8bcc0;background:#f2f2f2"></div>
<svg class="a" style="left:44px;top:527px" width="32" height="8"><path d="M6 4l2.5-2v4z M14 4l2.5-2v4z M20 2l2.5 2-2.5 2z M26 2l2.5 2-2.5 2z" fill="#888"/><path d="M10.5 1v6M18.5 1v6M29.5 1v6" stroke="#bbb" stroke-width=".6"/></svg>
<div class="a" style="left:76px;top:527px;width:22px;height:7.5px;background:#fff;border:1px solid #aaa;border-top:none;font-size:5.6px;line-height:7px;font-weight:bold;text-align:center;color:#222">Model</div>
<svg class="a" style="left:97px;top:527px" width="31" height="8"><path d="M0 0H31L28 7.5H3Z" fill="#000"/></svg>
<div class="a" style="left:99px;top:527px;width:27px;font-size:5.6px;line-height:7.5px;text-align:center;color:#fff;font-weight:bold">Layout1</div>
<svg class="a" style="left:624px;top:527px" width="26" height="8"><path d="M1 0.5v7M23 0.5v7" stroke="#ccc" stroke-width=".6"/><path d="M4 4l3-2v4z" fill="#222"/><rect x="11" y="1" width="8" height="6" fill="#dcdcdc" stroke="#aaa" stroke-width=".6"/><path d="M13.5 2.5v3M15 2.5v3M16.5 2.5v3" stroke="#999" stroke-width=".5"/></svg>
<div class="a" style="left:0;top:537px;width:8px;height:38px;background:#a6aaaf"></div>
<div class="a" style="left:2px;top:539px;width:5px;height:2px;background:#222"></div>
<div class="a" style="left:8px;top:537px;width:792px;height:38px;background:#fff"></div>
<div class="a" style="left:9px;top:538.5px;font-family:&quot;Liberation Mono&quot;,monospace;font-size:6.68px;line-height:8px;color:#000;white-space:pre;font-weight:bold">Command: _vscurrent</div>
<div class="a" style="left:9px;top:546.5px;font-family:&quot;Liberation Mono&quot;,monospace;font-size:6.68px;line-height:8px;color:#000;white-space:pre;font-weight:bold">Enter an option [2dwireframe/3dwireframe/3dhidden/Realistic/Conceptual/Other]</div>
<div class="a" style="left:9px;top:554.7px;font-family:&quot;Liberation Mono&quot;,monospace;font-size:6.68px;line-height:8px;color:#000;white-space:pre;font-weight:bold">&lt;2dwireframe&gt;: _R</div>
<div class="a" style="left:8px;top:565px;width:792px;height:1px;background:#8a8a8a"></div>
<div class="a" style="left:9px;top:567px;font-family:&quot;Liberation Mono&quot;,monospace;font-size:6.68px;line-height:8px;color:#000;white-space:pre;font-weight:bold">Command:</div>
<div class="a" style="left:0;top:575px;width:800px;height:11px;background:linear-gradient(#fdfdfd,#e4e6e9)"></div>
<div class="a" style="left:9px;top:576.5px;font-size:6px;line-height:9px;color:#c0c0c0;white-space:nowrap;letter-spacing:.3px">-74.71, 42.01, 0.00</div>
<div class="a" style="left:85px;top:575.5px;width:106px;height:10.5px;background:linear-gradient(#dcdfe2,#c6cacf)"></div>
<svg class="a" style="left:85px;top:575.5px" width="106" height="11"><path d="M4 4v3h3" fill="none" stroke="#111" stroke-width="1.3"/><path d="M12 2.5h8v6h-8zM12 5.5h8M14.7 2.5v6M17.3 2.5v6" fill="none" stroke="#333" stroke-width=".9"/><rect x="21" y="0.5" width="9" height="10" fill="#c8dcf0"/><path d="M24 3v5" stroke="#335" stroke-width="1.2"/><path d="M30.5 1v9" stroke="#888" stroke-width=".7"/><circle cx="36" cy="5.5" r="2.5" fill="none" stroke="#555" stroke-width=".9"/><rect x="41" y="1" width="9" height="9" fill="#e8eef4"/><path d="M42 2h7v7h-7z" fill="none" stroke="#333" stroke-width=".9"/><rect x="51" y="0.5" width="10" height="10" fill="#c8dcf0"/><path d="M53 8h6M55 7l3-3" stroke="#1a3a70" stroke-width="1.1"/><path d="M62 1v9" stroke="#888" stroke-width=".7"/><rect x="63" y="0.5" width="10" height="10" fill="#d8d0a8"/><path d="M65 8h6M67 7l3-4" stroke="#665020" stroke-width="1.1"/><path d="M75 3v5h4" fill="none" stroke="#333" stroke-width="1.1"/><path d="M85 5.5h7M88.5 2v7" stroke="#111" stroke-width="1.4"/><rect x="94" y="0.5" width="11" height="10" fill="#c8dcf0"/><rect x="97" y="3" width="5" height="5" fill="#334" /></svg>
<div class="a" style="left:687px;top:576px;width:23px;height:10px;background:#d8dbdf;border:1px solid #8e9297;font-size:5.6px;line-height:8px;font-weight:bold;text-align:center;color:#1a1a1a">MODEL</div>
<svg class="a" style="left:711px;top:575.5px" width="90" height="11"><rect x="0" y="0.5" width="10" height="10" fill="#e0e3e6" stroke="#999" stroke-width=".5"/><path d="M2.5 2.5h5v5h-5z" fill="#fff" stroke="#222" stroke-width=".9"/><rect x="11" y="0.5" width="10" height="10" fill="#e0e3e6" stroke="#999" stroke-width=".5"/><path d="M13 8h6M16 2v5" stroke="#222" stroke-width="1.1"/><rect x="25" y="0.5" width="46" height="10" fill="#dfe2e6"/><circle cx="30.5" cy="5.5" r="2.7" fill="none" stroke="#777" stroke-width=".8"/><circle cx="40" cy="5" r="2.5" fill="none" stroke="#333" stroke-width=".9"/><path d="M42 7l2 2" stroke="#333" stroke-width="1.1"/><circle cx="51.5" cy="5.5" r="2.8" fill="none" stroke="#444" stroke-width=".9"/><path d="M59 2h6v7h-6zM59 4h6" fill="none" stroke="#333" stroke-width=".9"/><path d="M71.5 1v9M84 1v9" stroke="#777" stroke-width=".7"/></svg>
<div class="a" style="left:0;top:585.5px;width:800px;height:14.5px;background:linear-gradient(#8a9098,#3a3f45 30%,#0c0d0f 65%,#000)"></div>
<svg class="a" style="left:4px;top:583px" width="24" height="17"><defs><radialGradient id="orb" cx=".5" cy=".35" r=".6"><stop offset="0" stop-color="#b8e4f8"/><stop offset=".5" stop-color="#3a80b8"/><stop offset="1" stop-color="#0a2a50"/></radialGradient></defs><circle cx="11.5" cy="11" r="10" fill="url(#orb)" stroke="#151a22" stroke-width="1.2"/><path d="M7 6.5h4v4H7z" fill="#f25022"/><path d="M12 6.5h4v4h-4z" fill="#7fba00"/><path d="M7 11.5h4v4H7z" fill="#00a4ef"/><path d="M12 11.5h4v4h-4z" fill="#ffb900"/></svg>
<svg class="a" style="left:33px;top:588px" width="4" height="12"><path d="M1 1v10M3 1v10" stroke="#666" stroke-width=".8" stroke-dasharray="1 1"/></svg>
<svg class="a" style="left:41.0px;top:589.5px" width="8" height="8"><rect x="0" y="1" width="8" height="6" fill="#3a70c0" stroke="#9ac" stroke-width=".6"/></svg>
<svg class="a" style="left:52.7px;top:589.5px" width="8" height="8"><rect x="0" y="1" width="8" height="6" fill="#5a88c8" stroke="#ccd" stroke-width=".6"/></svg>
<svg class="a" style="left:64.4px;top:589.5px" width="8" height="8"><circle cx="4" cy="4" r="3.3" fill="none" stroke="#3a8ae0" stroke-width="1.4"/><path d="M1 6l6-4" stroke="#e0b020" stroke-width=".9"/></svg>
<svg class="a" style="left:76.1px;top:589.5px" width="8" height="8"><rect x="0" y="0.5" width="8" height="7" fill="#8ac0e0" stroke="#dde" stroke-width=".6"/></svg>
<svg class="a" style="left:87.8px;top:589.5px" width="8" height="8"><rect x="0" y="1" width="8" height="6" fill="#1a8a3a"/><path d="M1.5 4h5" stroke="#cfc" stroke-width="1"/></svg>
<svg class="a" style="left:99.5px;top:589.5px" width="8" height="8"><rect x="0" y="0.5" width="8" height="7" fill="#f0f0f0"/><circle cx="4" cy="4.5" r="2.8" fill="#d02020"/></svg>
<svg class="a" style="left:111.2px;top:589.5px" width="8" height="8"><rect x="0" y="0.5" width="8" height="7" fill="#20a040"/><path d="M2 2v4h4" fill="none" stroke="#fff" stroke-width="1"/></svg>
<svg class="a" style="left:122.9px;top:589.5px" width="8" height="8"><rect x="0" y="0.5" width="8" height="7" fill="#e0a030"/><path d="M3 2l3 2.5-3 2.5z" fill="#fff6c0"/></svg>
<svg class="a" style="left:134.6px;top:589.5px" width="8" height="8"><rect x="0" y="0.5" width="8" height="7" fill="#f0e0e0"/><path d="M1 2h5v5" fill="none" stroke="#d02020" stroke-width="1.6"/></svg>
<svg class="a" style="left:146.3px;top:589.5px" width="8" height="8"><path d="M1 1h2v2H1zM5 1h2v2H5zM1 5h2v2H1zM5 5h2v2H5z" fill="#8ab0e0"/><path d="M3 3l2 2" stroke="#e0c040"/></svg>
<svg class="a" style="left:158.0px;top:589.5px" width="8" height="8"><circle cx="4" cy="4" r="3.5" fill="#e8d020"/><circle cx="4" cy="4" r="1.2" fill="#765"/></svg>
<svg class="a" style="left:169.7px;top:589.5px" width="8" height="8"><rect x="0" y="1" width="8" height="6" fill="#e8eef4"/><rect x="1" y="2" width="3" height="4" fill="#4a7ab0"/></svg>
<svg class="a" style="left:181.4px;top:589.5px" width="8" height="8"><path d="M1 1h3v3H1z" fill="#20a040"/><path d="M4 4h3v3H4z" fill="#c02020"/></svg>
<svg class="a" style="left:193.1px;top:589.5px" width="8" height="8"><rect x="0" y="0.5" width="8" height="7" fill="#f0f0ff"/><path d="M4 1l1 2.5 2.5.5-2 1.5.5 2.5L4 6.5 2 8l.5-2.5-2-1.5L3 3.5z" fill="#2a4ab0"/></svg>
<svg class="a" style="left:204.8px;top:589.5px" width="8" height="8"><path d="M4 0.5L7.5 7.5h-7z" fill="#e08a20"/><rect x="2" y="6" width="4" height="1.5" fill="#fff"/></svg>
<svg class="a" style="left:216.5px;top:589.5px" width="8" height="8"><path d="M1 7L4 1l3 6z" fill="#3a7ad8"/><path d="M1 7l3-3" stroke="#e04040" stroke-width="1"/></svg>
<svg class="a" style="left:228.2px;top:589.5px" width="8" height="8"><circle cx="4" cy="4" r="3" fill="#c03040"/><path d="M2.5 4h3" stroke="#fff" stroke-width="1"/></svg>
<svg class="a" style="left:239.9px;top:589.5px" width="8" height="8"><rect x="0" y="1" width="8" height="6" fill="#4a60c0"/><path d="M1 6l3-4 3 4" fill="none" stroke="#fff" stroke-width=".8"/></svg>
<svg class="a" style="left:276px;top:588px" width="4" height="12"><path d="M1 1v10M3 1v10" stroke="#666" stroke-width=".8" stroke-dasharray="1 1"/></svg>
<div class="a" style="left:285px;top:588.5px;width:75px;height:11.5px;background:linear-gradient(#5e646a,#2c3035 50%,#16181b);border:1px solid #050505;border-radius:1.5px;box-shadow:inset 0 0 0 1px rgba(255,255,255,.08)"></div>
<svg class="a" style="left:289px;top:590px" width="8" height="8"><path d="M0.5 1.5h3l1 1h3v5.5h-7z" fill="#e8c860"/><path d="M0.5 3.5h7v4.5h-7z" fill="#f4dc88"/></svg>
<div class="a" style="left:299px;top:588.5px;font-size:5.8px;line-height:11.5px;color:#f0f0f0;white-space:nowrap;overflow:hidden;width:60px">Quoting Drawings</div>
<div class="a" style="left:362px;top:588.5px;width:79px;height:11.5px;background:linear-gradient(#30353a,#08090b);border:1px solid #050505;border-radius:1.5px;box-shadow:inset 0 0 0 1px rgba(255,255,255,.08)"></div>
<svg class="a" style="left:366px;top:590px" width="8" height="8"><path d="M0.5 7.5L4 0.5l3.5 7z" fill="#d02020"/></svg>
<div class="a" style="left:376px;top:588.5px;font-size:5.8px;line-height:11.5px;color:#f0f0f0;white-space:nowrap;overflow:hidden;width:64px">AutoCAD 2009 - [Q2...</div>
<div class="a" style="left:443px;top:588.5px;width:76px;height:11.5px;background:linear-gradient(#5e646a,#2c3035 50%,#16181b);border:1px solid #050505;border-radius:1.5px;box-shadow:inset 0 0 0 1px rgba(255,255,255,.08)"></div>
<svg class="a" style="left:447px;top:590px" width="8" height="8"><rect x="0.5" y="0.5" width="7" height="7" fill="#20904a"/><path d="M2 2l4 4M6 2l-4 4" stroke="#fff" stroke-width="1"/></svg>
<div class="a" style="left:457px;top:588.5px;font-size:5.8px;line-height:11.5px;color:#f0f0f0;white-space:nowrap;overflow:hidden;width:61px">Microsoft Excel - Inf...</div>
<div class="a" style="left:522px;top:588.5px;width:78px;height:11.5px;background:linear-gradient(#5e646a,#2c3035 50%,#16181b);border:1px solid #050505;border-radius:1.5px;box-shadow:inset 0 0 0 1px rgba(255,255,255,.08)"></div>
<svg class="a" style="left:526px;top:590px" width="8" height="8"><path d="M0.5 1.5h3l1 1h3v5.5h-7z" fill="#e8c860"/><path d="M0.5 3.5h7v4.5h-7z" fill="#f4dc88"/></svg>
<div class="a" style="left:536px;top:588.5px;font-size:5.8px;line-height:11.5px;color:#f0f0f0;white-space:nowrap;overflow:hidden;width:63px">Written Quotes</div>
<svg class="a" style="left:734px;top:588px" width="4" height="12"><path d="M1 1v10M3 1v10" stroke="#666" stroke-width=".8" stroke-dasharray="1 1"/></svg>
<div class="a" style="left:743px;top:589px;font-size:5.8px;line-height:11px;color:#fff;white-space:nowrap">Templates</div>
<div class="a" style="left:772px;top:586px;font-size:7px;line-height:8px;color:#fff">&raquo;</div>
<svg class="a" style="left:786px;top:588px" width="4" height="12"><path d="M1 1v10M3 1v10" stroke="#666" stroke-width=".8" stroke-dasharray="1 1"/></svg>
<div class="a" style="left:793px;top:589px;font-size:5.8px;line-height:11px;color:#fff;white-space:nowrap">Mor</div>
</body></html>
